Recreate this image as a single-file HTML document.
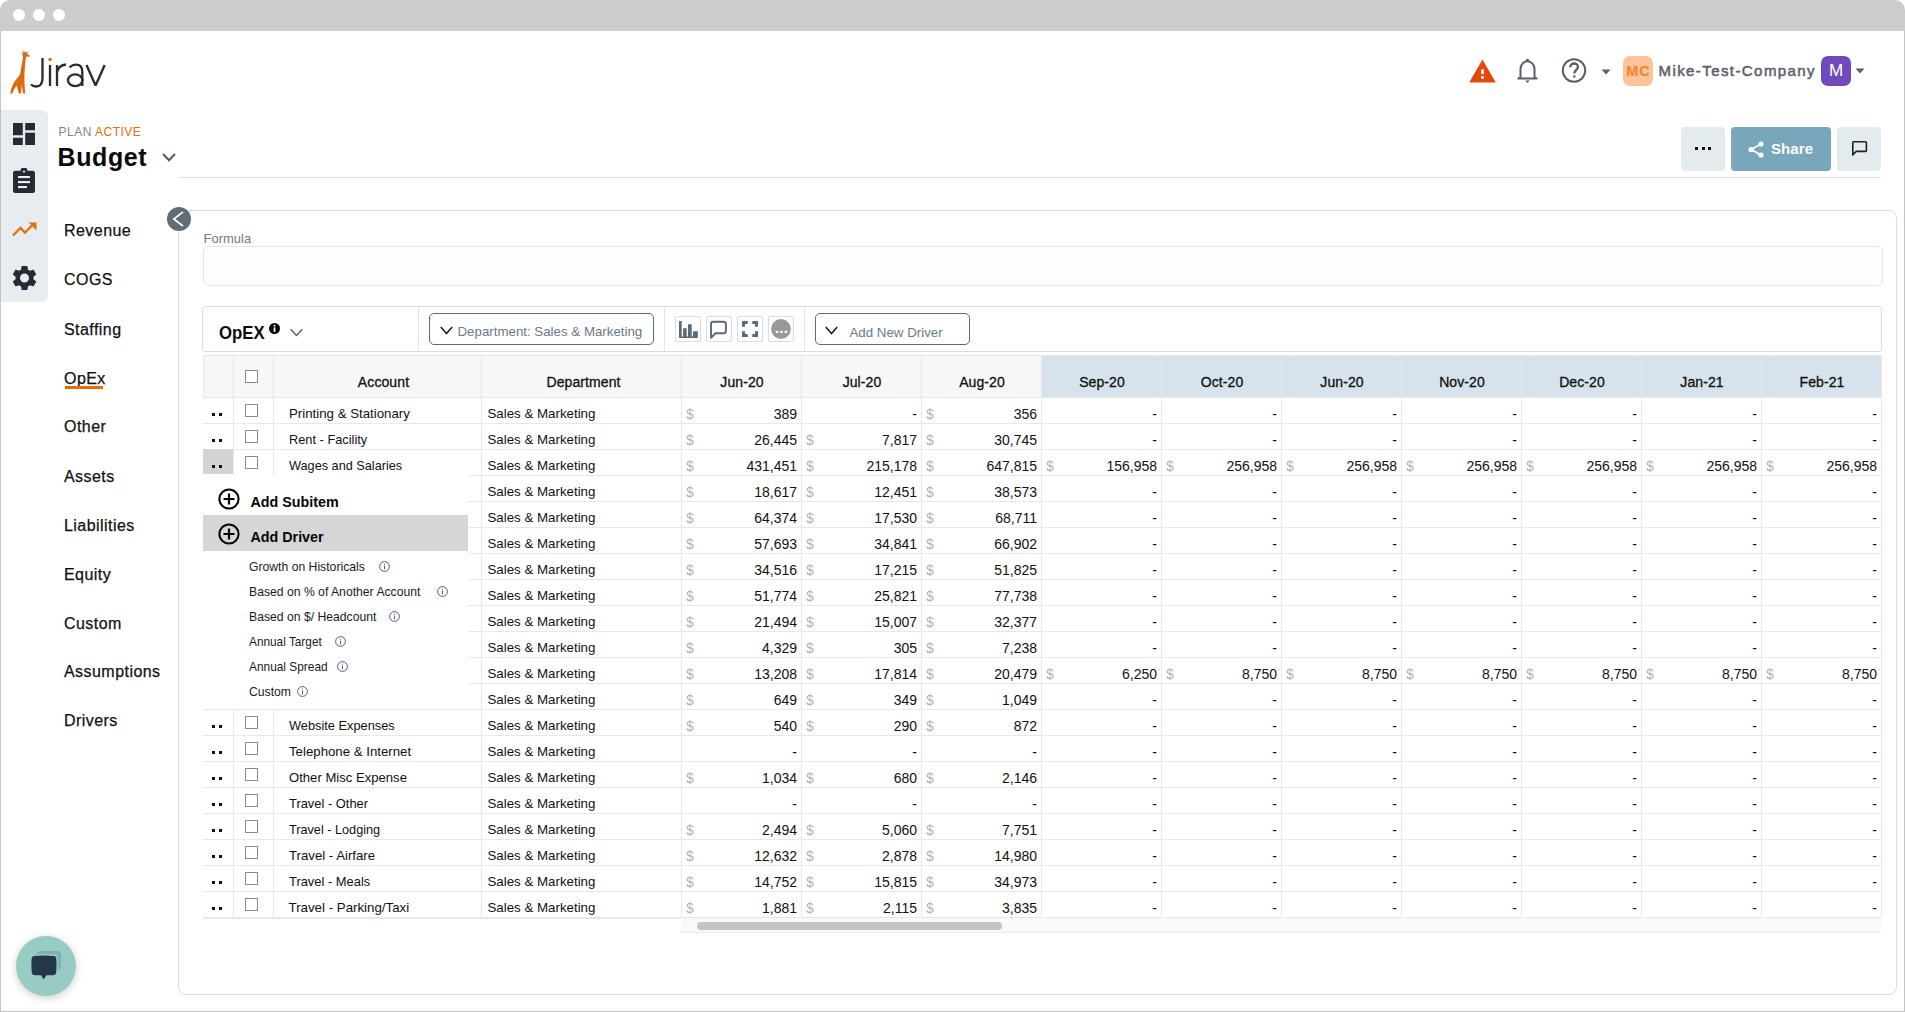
<!DOCTYPE html><html><head><meta charset="utf-8"><style>
html,body{margin:0;padding:0;width:1905px;height:1012px;overflow:hidden;background:#fff;font-family:"Liberation Sans", sans-serif;}
.t{position:absolute;white-space:nowrap;color:#000;}
.b{position:absolute;box-sizing:border-box;}
</style></head><body>
<div class="b" style="left:0px;top:0px;width:1905px;height:1012px;background:#fff;"></div>
<div class="b" style="left:0px;top:0px;width:1905px;height:31px;background:#cdcdcd;border-radius:10px 10px 0 0;"></div>
<div class="b" style="left:13px;top:9px;width:12px;height:12px;background:#fff;border-radius:50%;"></div>
<div class="b" style="left:33px;top:9px;width:12px;height:12px;background:#fff;border-radius:50%;"></div>
<div class="b" style="left:53px;top:9px;width:12px;height:12px;background:#fff;border-radius:50%;"></div>
<div class="b" style="left:0px;top:31px;width:1px;height:981px;background:#c4c4c4;"></div>
<div class="b" style="left:1904px;top:31px;width:1px;height:981px;background:#c4c4c4;"></div>
<div class="b" style="left:0px;top:1011px;width:1905px;height:1px;background:#c4c4c4;"></div>
<svg class="b" style="left:0;top:0" width="120" height="100" viewBox="0 0 120 100"><path fill="#e06a0a" d="M21 52.3 L23 53.6 L23.4 50.2 L24.2 52.4 L25.1 50.2 L25.6 52.7 L28.2 51.6 L27.2 54.3 L29.9 55.4 L29.6 56.7 L26.6 56.4 L25.9 57.2 C25.2 64 24.3 72 24.4 79 C24.4 84 25 89 25.1 93.4 L23 93.4 L21.8 84.5 L21.1 93.4 L18.9 93.4 L16.8 85.8 C15 87.5 13.5 90.5 12.6 93.4 L10.3 93.4 C11 88 13 83 16.5 79 C18.5 77 19.8 75.5 20.5 72 L23 57.5 L22.6 54.6 Z"/><g fill="none" stroke="#2b2b2b" stroke-width="2.3" stroke-linecap="butt"><path d="M42.5 58 V78 c0 6-3 8.5-6.5 8.5 c-2.5 0-4-1-5-2"/><path d="M50 65 V86"/><path d="M57 65 V86 M57 72 c1-4 4-7 9-7.5"/><path d="M69.5 67.3 c2-1.8 4.2-2.6 6.3-2.6 c4.5 0 6.5 2.5 6.5 7 V86"/><ellipse cx="75.2" cy="80.2" rx="7.2" ry="5.9"/><path stroke-linejoin="bevel" d="M86.5 65 L95.6 85.5 L104.7 65"/></g><circle cx="50" cy="59.5" r="1.7" fill="#e07010"/></svg>
<div class="b" style="left:1px;top:110px;width:47px;height:192px;background:#e6ecef;border-radius:0 6px 6px 0;"></div>
<svg class="b" style="left:13px;top:123px;" width="22" height="22" viewBox="3 3 18 18"><path fill="#262a33" d="M3 13h8V3H3v10zm0 8h8v-6H3v6zm10 0h8V11h-8v10zm0-18v6h8V3h-8z"/></svg>
<svg class="b" style="left:13px;top:168px;" width="22" height="25" viewBox="0 0 22 25"><path fill="#262a33" d="M2.2 2.8 H7.6 A3.4 3.4 0 0 1 14.4 2.8 H19.8 A2.2 2.2 0 0 1 22 5 V22.8 A2.2 2.2 0 0 1 19.8 25 H2.2 A2.2 2.2 0 0 1 0 22.8 V5 A2.2 2.2 0 0 1 2.2 2.8 Z"/><circle cx="11" cy="3.6" r="1.1" fill="#e6ecef"/><rect x="5" y="8" width="12" height="2.1" fill="#e6ecef"/><rect x="5" y="13" width="12" height="2.1" fill="#e6ecef"/><rect x="5" y="18" width="9" height="2.1" fill="#e6ecef"/></svg>
<svg class="b" style="left:12px;top:222px;" width="25" height="15" viewBox="0 0 25 15"><path fill="none" stroke="#e07010" stroke-width="2.4" d="M1 13.5 L8.5 6 L13 10.5 L20 3.5"/><path fill="#e07010" d="M16.5 0.5 H24.5 V8.5 Z"/></svg>
<svg class="b" style="left:11.5px;top:264.5px;" width="25" height="26" viewBox="2 2 20 20"><path fill="#262a33" d="M19.14 12.94c.04-.3.06-.61.06-.94 0-.32-.02-.64-.07-.94l2.03-1.58c.18-.14.23-.41.12-.61l-1.92-3.32c-.12-.22-.37-.29-.59-.22l-2.39.96c-.5-.38-1.03-.7-1.62-.94l-.36-2.54c-.04-.24-.24-.41-.48-.41h-3.84c-.24 0-.43.17-.47.41l-.36 2.54c-.59.24-1.13.57-1.62.94l-2.39-.96c-.22-.08-.47 0-.59.22L2.74 8.87c-.12.21-.08.47.12.61l2.03 1.58c-.05.3-.09.63-.09.94s.02.64.07.94l-2.03 1.58c-.18.14-.23.41-.12.61l1.92 3.32c.12.22.37.29.59.22l2.39-.96c.5.38 1.03.7 1.62.94l.36 2.54c.05.24.24.41.48.41h3.84c.24 0 .44-.17.47-.41l.36-2.54c.59-.24 1.13-.56 1.62-.94l2.39.96c.22.08.47 0 .59-.22l1.92-3.32c.12-.22.07-.47-.12-.61l-2.01-1.58zM12 15.6c-1.98 0-3.6-1.62-3.6-3.6s1.62-3.6 3.6-3.6 3.6 1.62 3.6 3.6-1.62 3.6-3.6 3.6z"/></svg>
<div class="t" style="left:58.5px;top:124.50px;font-size:12px;line-height:15px;color:#858585;letter-spacing:0.5px;">PLAN <span style="color:#e07010">ACTIVE</span></div>
<div class="t" style="left:57.5px;top:141.50px;font-size:25px;line-height:31px;font-weight:bold;color:#0a0a0a;letter-spacing:0.6px;">Budget</div>
<svg class="b" style="left:162px;top:153px;" width="14" height="9" viewBox="0 0 14 9"><path fill="none" stroke="#4d5d6c" stroke-width="2" d="M1 1 L7 7.3 L13 1"/></svg>
<div class="b" style="left:178px;top:177px;width:1703px;height:1px;background:#e3e3e3;"></div>
<div class="t" style="left:64px;top:220.50px;font-size:16px;line-height:20px;color:#111;letter-spacing:0.45px;-webkit-text-stroke:0.25px #111;">Revenue</div>
<div class="t" style="left:64px;top:269.50px;font-size:16px;line-height:20px;color:#111;letter-spacing:0.45px;-webkit-text-stroke:0.25px #111;">COGS</div>
<div class="t" style="left:64px;top:319.50px;font-size:16px;line-height:20px;color:#111;letter-spacing:0.45px;-webkit-text-stroke:0.25px #111;">Staffing</div>
<div class="t" style="left:64px;top:368.50px;font-size:16px;line-height:20px;color:#111;letter-spacing:0.45px;-webkit-text-stroke:0.25px #111;">OpEx</div>
<div class="t" style="left:64px;top:416.50px;font-size:16px;line-height:20px;color:#111;letter-spacing:0.45px;-webkit-text-stroke:0.25px #111;">Other</div>
<div class="t" style="left:64px;top:466.50px;font-size:16px;line-height:20px;color:#111;letter-spacing:0.45px;-webkit-text-stroke:0.25px #111;">Assets</div>
<div class="t" style="left:64px;top:515.50px;font-size:16px;line-height:20px;color:#111;letter-spacing:0.45px;-webkit-text-stroke:0.25px #111;">Liabilities</div>
<div class="t" style="left:64px;top:564.50px;font-size:16px;line-height:20px;color:#111;letter-spacing:0.45px;-webkit-text-stroke:0.25px #111;">Equity</div>
<div class="t" style="left:64px;top:613.50px;font-size:16px;line-height:20px;color:#111;letter-spacing:0.45px;-webkit-text-stroke:0.25px #111;">Custom</div>
<div class="t" style="left:64px;top:661.50px;font-size:16px;line-height:20px;color:#111;letter-spacing:0.45px;-webkit-text-stroke:0.25px #111;">Assumptions</div>
<div class="t" style="left:64px;top:710.50px;font-size:16px;line-height:20px;color:#111;letter-spacing:0.45px;-webkit-text-stroke:0.25px #111;">Drivers</div>
<div class="b" style="left:65px;top:386px;width:38px;height:3px;background:#e86c00;"></div>
<svg class="b" style="left:1469px;top:59px;" width="27" height="24" viewBox="0 0 27 24"><path fill="#e4470b" d="M13.5 0.5 L26.8 23.5 H0.2 Z"/><rect x="12.2" y="10.4" width="2.6" height="4.8" fill="#fff"/><rect x="12.2" y="17.2" width="2.6" height="2.6" fill="#fff"/></svg>
<svg class="b" style="left:1516px;top:58px;" width="23" height="25" viewBox="0 0 23 25"><path fill="none" stroke="#5b5e6b" stroke-width="2" stroke-linejoin="round" d="M4.5 20 V11 c0-4.2 3-7.7 7-7.7 s7 3.5 7 7.7 V18.5 c0 1 1 1.5 2 1.5 M4.5 18.5 c0 1-1 1.5-2 1.5 M1.5 20.4 H21.5"/><circle cx="11.5" cy="2.3" r="1.6" fill="#5b5e6b"/><path fill="#5b5e6b" d="M9.2 22.6 h4.6 l-2.3 2.3z"/></svg>
<svg class="b" style="left:1561px;top:58px;" width="26" height="25" viewBox="0 0 26 25"><circle cx="13" cy="12.5" r="11.2" fill="none" stroke="#5b5e6b" stroke-width="2"/><path fill="none" stroke="#5b5e6b" stroke-width="2.3" d="M9.2 9.3 c0-2.4 1.8-3.8 3.9-3.8 s3.9 1.4 3.9 3.6 c0 2.6-3.7 3.1-3.7 6.3"/><rect x="12.1" y="17.3" width="2.3" height="2.3" fill="#5b5e6b"/></svg>
<svg class="b" style="left:1601px;top:69px;" width="10" height="6" viewBox="0 0 10 6"><path fill="#5b5e6b" d="M0.5 0.5 H9.5 L5 5.5z"/></svg>
<div class="b" style="left:1623px;top:56px;width:30px;height:30px;background:#fdc49b;border-radius:7px;"></div>
<div class="t" style="left:1438.5px;width:400px;text-align:center;top:62.00px;font-size:14.5px;line-height:18px;color:#f7822b;font-weight:bold;letter-spacing:1px;">MC</div>
<div class="t" style="left:1658.5px;top:61.00px;font-size:15px;line-height:19px;color:#5f616d;letter-spacing:1.42px;-webkit-text-stroke:0.55px #5f616d;">Mike-Test-Company</div>
<div class="b" style="left:1821px;top:56px;width:30px;height:30px;background:#7049bd;border-radius:7px;"></div>
<div class="t" style="left:1636px;width:400px;text-align:center;top:60.00px;font-size:17px;line-height:21px;color:#fff;">M</div>
<svg class="b" style="left:1855px;top:68px;" width="10" height="6" viewBox="0 0 10 6"><path fill="#5b5e6b" d="M0.5 0.5 H9.5 L5 5.5z"/></svg>
<div class="b" style="left:1681px;top:127px;width:44px;height:44px;background:#e4ebef;border-radius:4px;"></div>
<div class="b" style="left:1695px;top:147px;width:3px;height:3px;background:#111;"></div>
<div class="b" style="left:1701.5px;top:147px;width:3px;height:3px;background:#111;"></div>
<div class="b" style="left:1708px;top:147px;width:3px;height:3px;background:#111;"></div>
<div class="b" style="left:1731px;top:127px;width:100px;height:44px;background:#78a6bb;border-radius:4px;"></div>
<svg class="b" style="left:1748px;top:141px;" width="16" height="17" viewBox="0 0 16 17"><g fill="#fff"><circle cx="13" cy="3" r="2.6"/><circle cx="3" cy="8.5" r="2.6"/><circle cx="13" cy="14" r="2.6"/></g><path fill="none" stroke="#fff" stroke-width="1.8" d="M13 3 L3 8.5 L13 14"/></svg>
<div class="t" style="left:1771px;top:139.00px;font-size:15px;line-height:19px;color:#fff;font-weight:bold;letter-spacing:0.1px;">Share</div>
<div class="b" style="left:1837px;top:127px;width:44px;height:44px;background:#e4ebef;border-radius:4px;"></div>
<svg class="b" style="left:1851px;top:140px;" width="17" height="17" viewBox="0 0 17 17"><path fill="none" stroke="#222" stroke-width="1.6" stroke-linejoin="round" d="M1.8 15 V2.5 a0.8 0.8 0 0 1 0.8-0.8 H14.6 a0.8 0.8 0 0 1 0.8 0.8 V10.6 a0.8 0.8 0 0 1-0.8 0.8 H5.2 Z"/></svg>
<div class="b" style="left:178px;top:210px;width:1719px;height:785px;border:1.5px solid #dcdcd8;border-radius:8px;"></div>
<svg class="b" style="left:167px;top:207px;" width="24" height="24" viewBox="0 0 24 24"><circle cx="12" cy="12" r="12" fill="#5e6d7a"/><path fill="none" stroke="#fff" stroke-width="1.7" d="M16 4.8 L6.8 12 L16 19"/></svg>
<div class="t" style="left:203.5px;top:230.50px;font-size:13px;line-height:16px;color:#6d7b88;">Formula</div>
<div class="b" style="left:203px;top:246px;width:1680px;height:40px;border:1px solid #e6e6e6;border-radius:5px;background:#fefefe;"></div>
<div class="b" style="left:202px;top:306px;width:1680px;height:46px;border:1px solid #dcdcdc;border-radius:3px;background:#fff;"></div>
<div class="b" style="left:418px;top:307px;width:1px;height:44px;background:#e3e3e3;"></div>
<div class="b" style="left:664px;top:307px;width:1px;height:44px;background:#e3e3e3;"></div>
<div class="b" style="left:804px;top:307px;width:1px;height:44px;background:#e3e3e3;"></div>
<div class="t" style="left:218.5px;top:321.50px;font-size:18.2px;line-height:23px;font-weight:bold;color:#0a0a0a;transform:scaleX(0.92);transform-origin:0 0;">OpEX</div>
<svg class="b" style="left:269px;top:323px;" width="11" height="11" viewBox="0 0 11 11"><circle cx="5.5" cy="5.5" r="5.5" fill="#000"/><rect x="4.6" y="4.4" width="1.8" height="4.4" fill="#fff"/><circle cx="5.5" cy="2.8" r="1" fill="#fff"/></svg>
<svg class="b" style="left:290px;top:328px;" width="13" height="9" viewBox="0 0 13 9"><path fill="none" stroke="#4d5a66" stroke-width="1.3" d="M0.7 1.2 L6.5 7.5 L12.3 1.2"/></svg>
<div class="b" style="left:429px;top:313px;width:225px;height:32px;border:1.5px solid #5b6b79;border-radius:5px;"></div>
<svg class="b" style="left:440px;top:326px;" width="13" height="9" viewBox="0 0 13 9"><path fill="none" stroke="#1e1e1e" stroke-width="1.6" d="M0.8 1 L6.5 7.5 L12.2 1"/></svg>
<div class="t" style="left:457.5px;top:323.00px;font-size:13.3px;line-height:17px;color:#6b7987;">Department: Sales &amp; Marketing</div>
<div class="b" style="left:675px;top:316px;width:26px;height:26px;border:1px solid #dcdcdc;border-radius:2px;"></div>
<div class="b" style="left:706px;top:316px;width:26px;height:26px;border:1px solid #dcdcdc;border-radius:2px;"></div>
<div class="b" style="left:737px;top:316px;width:26px;height:26px;border:1px solid #dcdcdc;border-radius:2px;"></div>
<div class="b" style="left:768px;top:316px;width:26px;height:26px;border:1px solid #dcdcdc;border-radius:2px;"></div>
<svg class="b" style="left:679px;top:321px;" width="19" height="17" viewBox="0 0 19 17"><path fill="#5b6a78" d="M0 0 H2.7 V17 H0 Z M4.1 7.2 H7.7 V17 H4.1 Z M9 3.3 H12.7 V17 H9 Z M14 10.3 H18.8 V17 H14 Z M0 15.4 H18.8 V17 H0 Z"/></svg>
<svg class="b" style="left:709px;top:320px;" width="19" height="19" viewBox="0 0 19 19"><path fill="none" stroke="#5b6a78" stroke-width="1.9" stroke-linejoin="round" d="M2 17.8 V4 a2.3 2.3 0 0 1 2.3-2.3 H14.6 a2.3 2.3 0 0 1 2.3 2.3 V11 a2.3 2.3 0 0 1-2.3 2.3 H6.6 Z"/></svg>
<svg class="b" style="left:742px;top:321px;" width="16" height="16" viewBox="0 0 16 16"><path fill="#5b6a78" d="M0 0 H5.7 V3 H3 V5.7 H0 Z M10.3 0 H16 V5.7 H13 V3 H10.3 Z M16 10.3 V16 H10.3 V13 H13 V10.3 Z M5.7 16 H0 V10.3 H3 V13 H5.7 Z"/></svg>
<svg class="b" style="left:771px;top:319px;" width="20" height="20" viewBox="0 0 20 20"><circle cx="10" cy="10" r="9.9" fill="#999"/><g fill="#fff"><rect x="4.9" y="11.7" width="2.3" height="2.3" rx="0.6"/><rect x="9.2" y="11.7" width="2.3" height="2.3" rx="0.6"/><rect x="13.8" y="11.7" width="2.3" height="2.3" rx="0.6"/></g></svg>
<div class="b" style="left:815px;top:313px;width:155px;height:32px;border:1.5px solid #5b6b79;border-radius:5px;"></div>
<svg class="b" style="left:825px;top:326px;" width="13" height="9" viewBox="0 0 13 9"><path fill="none" stroke="#1e1e1e" stroke-width="1.6" d="M0.8 1 L6.5 7.5 L12.2 1"/></svg>
<div class="t" style="left:849.5px;top:323.50px;font-size:13.3px;line-height:17px;color:#6b7987;">Add New Driver</div>
<div class="b" style="left:203px;top:355px;width:838px;height:42px;background:#f7f7f7;"></div>
<div class="b" style="left:1041px;top:355px;width:840px;height:42px;background:#d6e3ec;"></div>
<div class="b" style="left:203px;top:355px;width:1678px;height:1px;background:#e8e8e8;"></div>
<div class="b" style="left:203px;top:355px;width:1px;height:42px;background:#e8e8e8;"></div>
<div class="b" style="left:203px;top:397px;width:1678px;height:1px;background:#e8e8e8;"></div>
<div class="b" style="left:233px;top:355px;width:1px;height:42px;background:#e8e8e8;"></div>
<div class="b" style="left:273px;top:355px;width:1px;height:42px;background:#e8e8e8;"></div>
<div class="b" style="left:481px;top:355px;width:1px;height:42px;background:#e8e8e8;"></div>
<div class="b" style="left:681px;top:355px;width:1px;height:42px;background:#e8e8e8;"></div>
<div class="b" style="left:801px;top:355px;width:1px;height:42px;background:#e8e8e8;"></div>
<div class="b" style="left:921px;top:355px;width:1px;height:42px;background:#e8e8e8;"></div>
<div class="b" style="left:1041px;top:355px;width:1px;height:42px;background:#e8e8e8;"></div>
<div class="b" style="left:1161px;top:355px;width:1px;height:42px;background:#e8e8e8;"></div>
<div class="b" style="left:1281px;top:355px;width:1px;height:42px;background:#e8e8e8;"></div>
<div class="b" style="left:1401px;top:355px;width:1px;height:42px;background:#e8e8e8;"></div>
<div class="b" style="left:1521px;top:355px;width:1px;height:42px;background:#e8e8e8;"></div>
<div class="b" style="left:1641px;top:355px;width:1px;height:42px;background:#e8e8e8;"></div>
<div class="b" style="left:1761px;top:355px;width:1px;height:42px;background:#e8e8e8;"></div>
<div class="b" style="left:1881px;top:355px;width:1px;height:42px;background:#e8e8e8;"></div>
<div class="b" style="left:245px;top:370px;width:13px;height:13px;border:1px solid #8a8a8a;background:#fff;"></div>
<div class="t" style="left:183.5px;width:400px;text-align:center;top:373.00px;font-size:14px;line-height:18px;color:#111;-webkit-text-stroke:0.3px #111;letter-spacing:0.1px;">Account</div>
<div class="t" style="left:383.5px;width:400px;text-align:center;top:373.00px;font-size:14px;line-height:18px;color:#111;-webkit-text-stroke:0.3px #111;letter-spacing:0.1px;">Department</div>
<div class="t" style="left:542.0px;width:400px;text-align:center;top:373.00px;font-size:14px;line-height:18px;color:#111;-webkit-text-stroke:0.3px #111;letter-spacing:0.1px;">Jun-20</div>
<div class="t" style="left:662.0px;width:400px;text-align:center;top:373.00px;font-size:14px;line-height:18px;color:#111;-webkit-text-stroke:0.3px #111;letter-spacing:0.1px;">Jul-20</div>
<div class="t" style="left:782.0px;width:400px;text-align:center;top:373.00px;font-size:14px;line-height:18px;color:#111;-webkit-text-stroke:0.3px #111;letter-spacing:0.1px;">Aug-20</div>
<div class="t" style="left:902.0px;width:400px;text-align:center;top:373.00px;font-size:14px;line-height:18px;color:#111;-webkit-text-stroke:0.3px #111;letter-spacing:0.1px;">Sep-20</div>
<div class="t" style="left:1022.0px;width:400px;text-align:center;top:373.00px;font-size:14px;line-height:18px;color:#111;-webkit-text-stroke:0.3px #111;letter-spacing:0.1px;">Oct-20</div>
<div class="t" style="left:1142.0px;width:400px;text-align:center;top:373.00px;font-size:14px;line-height:18px;color:#111;-webkit-text-stroke:0.3px #111;letter-spacing:0.1px;">Jun-20</div>
<div class="t" style="left:1262.0px;width:400px;text-align:center;top:373.00px;font-size:14px;line-height:18px;color:#111;-webkit-text-stroke:0.3px #111;letter-spacing:0.1px;">Nov-20</div>
<div class="t" style="left:1382.0px;width:400px;text-align:center;top:373.00px;font-size:14px;line-height:18px;color:#111;-webkit-text-stroke:0.3px #111;letter-spacing:0.1px;">Dec-20</div>
<div class="t" style="left:1502.0px;width:400px;text-align:center;top:373.00px;font-size:14px;line-height:18px;color:#111;-webkit-text-stroke:0.3px #111;letter-spacing:0.1px;">Jan-21</div>
<div class="t" style="left:1622.0px;width:400px;text-align:center;top:373.00px;font-size:14px;line-height:18px;color:#111;-webkit-text-stroke:0.3px #111;letter-spacing:0.1px;">Feb-21</div>
<div class="b" style="left:203px;top:423px;width:1678px;height:1px;background:#e8e8e8;"></div>
<div class="b" style="left:233px;top:397px;width:1px;height:26px;background:#e8e8e8;"></div>
<div class="b" style="left:273px;top:397px;width:1px;height:26px;background:#e8e8e8;"></div>
<div class="b" style="left:481px;top:397px;width:1px;height:26px;background:#e8e8e8;"></div>
<div class="b" style="left:681px;top:397px;width:1px;height:26px;background:#e8e8e8;"></div>
<div class="b" style="left:801px;top:397px;width:1px;height:26px;background:#e8e8e8;"></div>
<div class="b" style="left:921px;top:397px;width:1px;height:26px;background:#e8e8e8;"></div>
<div class="b" style="left:1041px;top:397px;width:1px;height:26px;background:#e8e8e8;"></div>
<div class="b" style="left:1161px;top:397px;width:1px;height:26px;background:#e8e8e8;"></div>
<div class="b" style="left:1281px;top:397px;width:1px;height:26px;background:#e8e8e8;"></div>
<div class="b" style="left:1401px;top:397px;width:1px;height:26px;background:#e8e8e8;"></div>
<div class="b" style="left:1521px;top:397px;width:1px;height:26px;background:#e8e8e8;"></div>
<div class="b" style="left:1641px;top:397px;width:1px;height:26px;background:#e8e8e8;"></div>
<div class="b" style="left:1761px;top:397px;width:1px;height:26px;background:#e8e8e8;"></div>
<div class="b" style="left:1881px;top:397px;width:1px;height:26px;background:#e8e8e8;"></div>
<div class="t" style="left:487.5px;top:405.00px;font-size:13.3px;line-height:17px;color:#111;">Sales &amp; Marketing</div>
<div class="t" style="left:686px;top:404.50px;font-size:14px;line-height:18px;color:#b3b3b3;">$</div>
<div class="t" style="right:1108px;top:404.50px;font-size:14px;line-height:18px;color:#111;">389</div>
<div class="t" style="right:988px;top:404.50px;font-size:14px;line-height:18px;color:#111;">-</div>
<div class="t" style="left:926px;top:404.50px;font-size:14px;line-height:18px;color:#b3b3b3;">$</div>
<div class="t" style="right:868px;top:404.50px;font-size:14px;line-height:18px;color:#111;">356</div>
<div class="t" style="right:748px;top:404.50px;font-size:14px;line-height:18px;color:#111;">-</div>
<div class="t" style="right:628px;top:404.50px;font-size:14px;line-height:18px;color:#111;">-</div>
<div class="t" style="right:508px;top:404.50px;font-size:14px;line-height:18px;color:#111;">-</div>
<div class="t" style="right:388px;top:404.50px;font-size:14px;line-height:18px;color:#111;">-</div>
<div class="t" style="right:268px;top:404.50px;font-size:14px;line-height:18px;color:#111;">-</div>
<div class="t" style="right:148px;top:404.50px;font-size:14px;line-height:18px;color:#111;">-</div>
<div class="t" style="right:28px;top:404.50px;font-size:14px;line-height:18px;color:#111;">-</div>
<div class="t" style="left:288.5px;top:405.00px;font-size:13.3px;line-height:17px;color:#111;transform:scaleX(0.997);transform-origin:0 0;">Printing &amp; Stationary</div>
<div class="b" style="left:245px;top:404px;width:13px;height:13px;border:1px solid #8a8a8a;background:#fff;"></div>
<div class="b" style="left:212px;top:413px;width:3px;height:3px;background:#111;"></div>
<div class="b" style="left:219px;top:413px;width:3px;height:3px;background:#111;"></div>
<div class="b" style="left:203px;top:449px;width:1678px;height:1px;background:#e8e8e8;"></div>
<div class="b" style="left:233px;top:423px;width:1px;height:26px;background:#e8e8e8;"></div>
<div class="b" style="left:273px;top:423px;width:1px;height:26px;background:#e8e8e8;"></div>
<div class="b" style="left:481px;top:423px;width:1px;height:26px;background:#e8e8e8;"></div>
<div class="b" style="left:681px;top:423px;width:1px;height:26px;background:#e8e8e8;"></div>
<div class="b" style="left:801px;top:423px;width:1px;height:26px;background:#e8e8e8;"></div>
<div class="b" style="left:921px;top:423px;width:1px;height:26px;background:#e8e8e8;"></div>
<div class="b" style="left:1041px;top:423px;width:1px;height:26px;background:#e8e8e8;"></div>
<div class="b" style="left:1161px;top:423px;width:1px;height:26px;background:#e8e8e8;"></div>
<div class="b" style="left:1281px;top:423px;width:1px;height:26px;background:#e8e8e8;"></div>
<div class="b" style="left:1401px;top:423px;width:1px;height:26px;background:#e8e8e8;"></div>
<div class="b" style="left:1521px;top:423px;width:1px;height:26px;background:#e8e8e8;"></div>
<div class="b" style="left:1641px;top:423px;width:1px;height:26px;background:#e8e8e8;"></div>
<div class="b" style="left:1761px;top:423px;width:1px;height:26px;background:#e8e8e8;"></div>
<div class="b" style="left:1881px;top:423px;width:1px;height:26px;background:#e8e8e8;"></div>
<div class="t" style="left:487.5px;top:431.00px;font-size:13.3px;line-height:17px;color:#111;">Sales &amp; Marketing</div>
<div class="t" style="left:686px;top:430.50px;font-size:14px;line-height:18px;color:#b3b3b3;">$</div>
<div class="t" style="right:1108px;top:430.50px;font-size:14px;line-height:18px;color:#111;">26,445</div>
<div class="t" style="left:806px;top:430.50px;font-size:14px;line-height:18px;color:#b3b3b3;">$</div>
<div class="t" style="right:988px;top:430.50px;font-size:14px;line-height:18px;color:#111;">7,817</div>
<div class="t" style="left:926px;top:430.50px;font-size:14px;line-height:18px;color:#b3b3b3;">$</div>
<div class="t" style="right:868px;top:430.50px;font-size:14px;line-height:18px;color:#111;">30,745</div>
<div class="t" style="right:748px;top:430.50px;font-size:14px;line-height:18px;color:#111;">-</div>
<div class="t" style="right:628px;top:430.50px;font-size:14px;line-height:18px;color:#111;">-</div>
<div class="t" style="right:508px;top:430.50px;font-size:14px;line-height:18px;color:#111;">-</div>
<div class="t" style="right:388px;top:430.50px;font-size:14px;line-height:18px;color:#111;">-</div>
<div class="t" style="right:268px;top:430.50px;font-size:14px;line-height:18px;color:#111;">-</div>
<div class="t" style="right:148px;top:430.50px;font-size:14px;line-height:18px;color:#111;">-</div>
<div class="t" style="right:28px;top:430.50px;font-size:14px;line-height:18px;color:#111;">-</div>
<div class="t" style="left:288.5px;top:431.00px;font-size:13.3px;line-height:17px;color:#111;transform:scaleX(0.963);transform-origin:0 0;">Rent - Facility</div>
<div class="b" style="left:245px;top:430px;width:13px;height:13px;border:1px solid #8a8a8a;background:#fff;"></div>
<div class="b" style="left:212px;top:439px;width:3px;height:3px;background:#111;"></div>
<div class="b" style="left:219px;top:439px;width:3px;height:3px;background:#111;"></div>
<div class="b" style="left:203px;top:475px;width:1678px;height:1px;background:#e8e8e8;"></div>
<div class="b" style="left:233px;top:449px;width:1px;height:26px;background:#e8e8e8;"></div>
<div class="b" style="left:273px;top:449px;width:1px;height:26px;background:#e8e8e8;"></div>
<div class="b" style="left:481px;top:449px;width:1px;height:26px;background:#e8e8e8;"></div>
<div class="b" style="left:681px;top:449px;width:1px;height:26px;background:#e8e8e8;"></div>
<div class="b" style="left:801px;top:449px;width:1px;height:26px;background:#e8e8e8;"></div>
<div class="b" style="left:921px;top:449px;width:1px;height:26px;background:#e8e8e8;"></div>
<div class="b" style="left:1041px;top:449px;width:1px;height:26px;background:#e8e8e8;"></div>
<div class="b" style="left:1161px;top:449px;width:1px;height:26px;background:#e8e8e8;"></div>
<div class="b" style="left:1281px;top:449px;width:1px;height:26px;background:#e8e8e8;"></div>
<div class="b" style="left:1401px;top:449px;width:1px;height:26px;background:#e8e8e8;"></div>
<div class="b" style="left:1521px;top:449px;width:1px;height:26px;background:#e8e8e8;"></div>
<div class="b" style="left:1641px;top:449px;width:1px;height:26px;background:#e8e8e8;"></div>
<div class="b" style="left:1761px;top:449px;width:1px;height:26px;background:#e8e8e8;"></div>
<div class="b" style="left:1881px;top:449px;width:1px;height:26px;background:#e8e8e8;"></div>
<div class="t" style="left:487.5px;top:457.00px;font-size:13.3px;line-height:17px;color:#111;">Sales &amp; Marketing</div>
<div class="t" style="left:686px;top:456.50px;font-size:14px;line-height:18px;color:#b3b3b3;">$</div>
<div class="t" style="right:1108px;top:456.50px;font-size:14px;line-height:18px;color:#111;">431,451</div>
<div class="t" style="left:806px;top:456.50px;font-size:14px;line-height:18px;color:#b3b3b3;">$</div>
<div class="t" style="right:988px;top:456.50px;font-size:14px;line-height:18px;color:#111;">215,178</div>
<div class="t" style="left:926px;top:456.50px;font-size:14px;line-height:18px;color:#b3b3b3;">$</div>
<div class="t" style="right:868px;top:456.50px;font-size:14px;line-height:18px;color:#111;">647,815</div>
<div class="t" style="left:1046px;top:456.50px;font-size:14px;line-height:18px;color:#b3b3b3;">$</div>
<div class="t" style="right:748px;top:456.50px;font-size:14px;line-height:18px;color:#111;">156,958</div>
<div class="t" style="left:1166px;top:456.50px;font-size:14px;line-height:18px;color:#b3b3b3;">$</div>
<div class="t" style="right:628px;top:456.50px;font-size:14px;line-height:18px;color:#111;">256,958</div>
<div class="t" style="left:1286px;top:456.50px;font-size:14px;line-height:18px;color:#b3b3b3;">$</div>
<div class="t" style="right:508px;top:456.50px;font-size:14px;line-height:18px;color:#111;">256,958</div>
<div class="t" style="left:1406px;top:456.50px;font-size:14px;line-height:18px;color:#b3b3b3;">$</div>
<div class="t" style="right:388px;top:456.50px;font-size:14px;line-height:18px;color:#111;">256,958</div>
<div class="t" style="left:1526px;top:456.50px;font-size:14px;line-height:18px;color:#b3b3b3;">$</div>
<div class="t" style="right:268px;top:456.50px;font-size:14px;line-height:18px;color:#111;">256,958</div>
<div class="t" style="left:1646px;top:456.50px;font-size:14px;line-height:18px;color:#b3b3b3;">$</div>
<div class="t" style="right:148px;top:456.50px;font-size:14px;line-height:18px;color:#111;">256,958</div>
<div class="t" style="left:1766px;top:456.50px;font-size:14px;line-height:18px;color:#b3b3b3;">$</div>
<div class="t" style="right:28px;top:456.50px;font-size:14px;line-height:18px;color:#111;">256,958</div>
<div class="t" style="left:288.5px;top:457.00px;font-size:13.3px;line-height:17px;color:#111;transform:scaleX(0.955);transform-origin:0 0;">Wages and Salaries</div>
<div class="b" style="left:245px;top:456px;width:13px;height:13px;border:1px solid #8a8a8a;background:#fff;"></div>
<div class="b" style="left:203px;top:449px;width:30px;height:25px;background:#d4d4d4;"></div>
<div class="b" style="left:212px;top:465px;width:3px;height:3px;background:#111;"></div>
<div class="b" style="left:219px;top:465px;width:3px;height:3px;background:#111;"></div>
<div class="b" style="left:203px;top:501px;width:1678px;height:1px;background:#e8e8e8;"></div>
<div class="b" style="left:233px;top:475px;width:1px;height:26px;background:#e8e8e8;"></div>
<div class="b" style="left:273px;top:475px;width:1px;height:26px;background:#e8e8e8;"></div>
<div class="b" style="left:481px;top:475px;width:1px;height:26px;background:#e8e8e8;"></div>
<div class="b" style="left:681px;top:475px;width:1px;height:26px;background:#e8e8e8;"></div>
<div class="b" style="left:801px;top:475px;width:1px;height:26px;background:#e8e8e8;"></div>
<div class="b" style="left:921px;top:475px;width:1px;height:26px;background:#e8e8e8;"></div>
<div class="b" style="left:1041px;top:475px;width:1px;height:26px;background:#e8e8e8;"></div>
<div class="b" style="left:1161px;top:475px;width:1px;height:26px;background:#e8e8e8;"></div>
<div class="b" style="left:1281px;top:475px;width:1px;height:26px;background:#e8e8e8;"></div>
<div class="b" style="left:1401px;top:475px;width:1px;height:26px;background:#e8e8e8;"></div>
<div class="b" style="left:1521px;top:475px;width:1px;height:26px;background:#e8e8e8;"></div>
<div class="b" style="left:1641px;top:475px;width:1px;height:26px;background:#e8e8e8;"></div>
<div class="b" style="left:1761px;top:475px;width:1px;height:26px;background:#e8e8e8;"></div>
<div class="b" style="left:1881px;top:475px;width:1px;height:26px;background:#e8e8e8;"></div>
<div class="t" style="left:487.5px;top:483.00px;font-size:13.3px;line-height:17px;color:#111;">Sales &amp; Marketing</div>
<div class="t" style="left:686px;top:482.50px;font-size:14px;line-height:18px;color:#b3b3b3;">$</div>
<div class="t" style="right:1108px;top:482.50px;font-size:14px;line-height:18px;color:#111;">18,617</div>
<div class="t" style="left:806px;top:482.50px;font-size:14px;line-height:18px;color:#b3b3b3;">$</div>
<div class="t" style="right:988px;top:482.50px;font-size:14px;line-height:18px;color:#111;">12,451</div>
<div class="t" style="left:926px;top:482.50px;font-size:14px;line-height:18px;color:#b3b3b3;">$</div>
<div class="t" style="right:868px;top:482.50px;font-size:14px;line-height:18px;color:#111;">38,573</div>
<div class="t" style="right:748px;top:482.50px;font-size:14px;line-height:18px;color:#111;">-</div>
<div class="t" style="right:628px;top:482.50px;font-size:14px;line-height:18px;color:#111;">-</div>
<div class="t" style="right:508px;top:482.50px;font-size:14px;line-height:18px;color:#111;">-</div>
<div class="t" style="right:388px;top:482.50px;font-size:14px;line-height:18px;color:#111;">-</div>
<div class="t" style="right:268px;top:482.50px;font-size:14px;line-height:18px;color:#111;">-</div>
<div class="t" style="right:148px;top:482.50px;font-size:14px;line-height:18px;color:#111;">-</div>
<div class="t" style="right:28px;top:482.50px;font-size:14px;line-height:18px;color:#111;">-</div>
<div class="b" style="left:203px;top:527px;width:1678px;height:1px;background:#e8e8e8;"></div>
<div class="b" style="left:233px;top:501px;width:1px;height:26px;background:#e8e8e8;"></div>
<div class="b" style="left:273px;top:501px;width:1px;height:26px;background:#e8e8e8;"></div>
<div class="b" style="left:481px;top:501px;width:1px;height:26px;background:#e8e8e8;"></div>
<div class="b" style="left:681px;top:501px;width:1px;height:26px;background:#e8e8e8;"></div>
<div class="b" style="left:801px;top:501px;width:1px;height:26px;background:#e8e8e8;"></div>
<div class="b" style="left:921px;top:501px;width:1px;height:26px;background:#e8e8e8;"></div>
<div class="b" style="left:1041px;top:501px;width:1px;height:26px;background:#e8e8e8;"></div>
<div class="b" style="left:1161px;top:501px;width:1px;height:26px;background:#e8e8e8;"></div>
<div class="b" style="left:1281px;top:501px;width:1px;height:26px;background:#e8e8e8;"></div>
<div class="b" style="left:1401px;top:501px;width:1px;height:26px;background:#e8e8e8;"></div>
<div class="b" style="left:1521px;top:501px;width:1px;height:26px;background:#e8e8e8;"></div>
<div class="b" style="left:1641px;top:501px;width:1px;height:26px;background:#e8e8e8;"></div>
<div class="b" style="left:1761px;top:501px;width:1px;height:26px;background:#e8e8e8;"></div>
<div class="b" style="left:1881px;top:501px;width:1px;height:26px;background:#e8e8e8;"></div>
<div class="t" style="left:487.5px;top:509.00px;font-size:13.3px;line-height:17px;color:#111;">Sales &amp; Marketing</div>
<div class="t" style="left:686px;top:508.50px;font-size:14px;line-height:18px;color:#b3b3b3;">$</div>
<div class="t" style="right:1108px;top:508.50px;font-size:14px;line-height:18px;color:#111;">64,374</div>
<div class="t" style="left:806px;top:508.50px;font-size:14px;line-height:18px;color:#b3b3b3;">$</div>
<div class="t" style="right:988px;top:508.50px;font-size:14px;line-height:18px;color:#111;">17,530</div>
<div class="t" style="left:926px;top:508.50px;font-size:14px;line-height:18px;color:#b3b3b3;">$</div>
<div class="t" style="right:868px;top:508.50px;font-size:14px;line-height:18px;color:#111;">68,711</div>
<div class="t" style="right:748px;top:508.50px;font-size:14px;line-height:18px;color:#111;">-</div>
<div class="t" style="right:628px;top:508.50px;font-size:14px;line-height:18px;color:#111;">-</div>
<div class="t" style="right:508px;top:508.50px;font-size:14px;line-height:18px;color:#111;">-</div>
<div class="t" style="right:388px;top:508.50px;font-size:14px;line-height:18px;color:#111;">-</div>
<div class="t" style="right:268px;top:508.50px;font-size:14px;line-height:18px;color:#111;">-</div>
<div class="t" style="right:148px;top:508.50px;font-size:14px;line-height:18px;color:#111;">-</div>
<div class="t" style="right:28px;top:508.50px;font-size:14px;line-height:18px;color:#111;">-</div>
<div class="b" style="left:203px;top:553px;width:1678px;height:1px;background:#e8e8e8;"></div>
<div class="b" style="left:233px;top:527px;width:1px;height:26px;background:#e8e8e8;"></div>
<div class="b" style="left:273px;top:527px;width:1px;height:26px;background:#e8e8e8;"></div>
<div class="b" style="left:481px;top:527px;width:1px;height:26px;background:#e8e8e8;"></div>
<div class="b" style="left:681px;top:527px;width:1px;height:26px;background:#e8e8e8;"></div>
<div class="b" style="left:801px;top:527px;width:1px;height:26px;background:#e8e8e8;"></div>
<div class="b" style="left:921px;top:527px;width:1px;height:26px;background:#e8e8e8;"></div>
<div class="b" style="left:1041px;top:527px;width:1px;height:26px;background:#e8e8e8;"></div>
<div class="b" style="left:1161px;top:527px;width:1px;height:26px;background:#e8e8e8;"></div>
<div class="b" style="left:1281px;top:527px;width:1px;height:26px;background:#e8e8e8;"></div>
<div class="b" style="left:1401px;top:527px;width:1px;height:26px;background:#e8e8e8;"></div>
<div class="b" style="left:1521px;top:527px;width:1px;height:26px;background:#e8e8e8;"></div>
<div class="b" style="left:1641px;top:527px;width:1px;height:26px;background:#e8e8e8;"></div>
<div class="b" style="left:1761px;top:527px;width:1px;height:26px;background:#e8e8e8;"></div>
<div class="b" style="left:1881px;top:527px;width:1px;height:26px;background:#e8e8e8;"></div>
<div class="t" style="left:487.5px;top:535.00px;font-size:13.3px;line-height:17px;color:#111;">Sales &amp; Marketing</div>
<div class="t" style="left:686px;top:534.50px;font-size:14px;line-height:18px;color:#b3b3b3;">$</div>
<div class="t" style="right:1108px;top:534.50px;font-size:14px;line-height:18px;color:#111;">57,693</div>
<div class="t" style="left:806px;top:534.50px;font-size:14px;line-height:18px;color:#b3b3b3;">$</div>
<div class="t" style="right:988px;top:534.50px;font-size:14px;line-height:18px;color:#111;">34,841</div>
<div class="t" style="left:926px;top:534.50px;font-size:14px;line-height:18px;color:#b3b3b3;">$</div>
<div class="t" style="right:868px;top:534.50px;font-size:14px;line-height:18px;color:#111;">66,902</div>
<div class="t" style="right:748px;top:534.50px;font-size:14px;line-height:18px;color:#111;">-</div>
<div class="t" style="right:628px;top:534.50px;font-size:14px;line-height:18px;color:#111;">-</div>
<div class="t" style="right:508px;top:534.50px;font-size:14px;line-height:18px;color:#111;">-</div>
<div class="t" style="right:388px;top:534.50px;font-size:14px;line-height:18px;color:#111;">-</div>
<div class="t" style="right:268px;top:534.50px;font-size:14px;line-height:18px;color:#111;">-</div>
<div class="t" style="right:148px;top:534.50px;font-size:14px;line-height:18px;color:#111;">-</div>
<div class="t" style="right:28px;top:534.50px;font-size:14px;line-height:18px;color:#111;">-</div>
<div class="b" style="left:203px;top:579px;width:1678px;height:1px;background:#e8e8e8;"></div>
<div class="b" style="left:233px;top:553px;width:1px;height:26px;background:#e8e8e8;"></div>
<div class="b" style="left:273px;top:553px;width:1px;height:26px;background:#e8e8e8;"></div>
<div class="b" style="left:481px;top:553px;width:1px;height:26px;background:#e8e8e8;"></div>
<div class="b" style="left:681px;top:553px;width:1px;height:26px;background:#e8e8e8;"></div>
<div class="b" style="left:801px;top:553px;width:1px;height:26px;background:#e8e8e8;"></div>
<div class="b" style="left:921px;top:553px;width:1px;height:26px;background:#e8e8e8;"></div>
<div class="b" style="left:1041px;top:553px;width:1px;height:26px;background:#e8e8e8;"></div>
<div class="b" style="left:1161px;top:553px;width:1px;height:26px;background:#e8e8e8;"></div>
<div class="b" style="left:1281px;top:553px;width:1px;height:26px;background:#e8e8e8;"></div>
<div class="b" style="left:1401px;top:553px;width:1px;height:26px;background:#e8e8e8;"></div>
<div class="b" style="left:1521px;top:553px;width:1px;height:26px;background:#e8e8e8;"></div>
<div class="b" style="left:1641px;top:553px;width:1px;height:26px;background:#e8e8e8;"></div>
<div class="b" style="left:1761px;top:553px;width:1px;height:26px;background:#e8e8e8;"></div>
<div class="b" style="left:1881px;top:553px;width:1px;height:26px;background:#e8e8e8;"></div>
<div class="t" style="left:487.5px;top:561.00px;font-size:13.3px;line-height:17px;color:#111;">Sales &amp; Marketing</div>
<div class="t" style="left:686px;top:560.50px;font-size:14px;line-height:18px;color:#b3b3b3;">$</div>
<div class="t" style="right:1108px;top:560.50px;font-size:14px;line-height:18px;color:#111;">34,516</div>
<div class="t" style="left:806px;top:560.50px;font-size:14px;line-height:18px;color:#b3b3b3;">$</div>
<div class="t" style="right:988px;top:560.50px;font-size:14px;line-height:18px;color:#111;">17,215</div>
<div class="t" style="left:926px;top:560.50px;font-size:14px;line-height:18px;color:#b3b3b3;">$</div>
<div class="t" style="right:868px;top:560.50px;font-size:14px;line-height:18px;color:#111;">51,825</div>
<div class="t" style="right:748px;top:560.50px;font-size:14px;line-height:18px;color:#111;">-</div>
<div class="t" style="right:628px;top:560.50px;font-size:14px;line-height:18px;color:#111;">-</div>
<div class="t" style="right:508px;top:560.50px;font-size:14px;line-height:18px;color:#111;">-</div>
<div class="t" style="right:388px;top:560.50px;font-size:14px;line-height:18px;color:#111;">-</div>
<div class="t" style="right:268px;top:560.50px;font-size:14px;line-height:18px;color:#111;">-</div>
<div class="t" style="right:148px;top:560.50px;font-size:14px;line-height:18px;color:#111;">-</div>
<div class="t" style="right:28px;top:560.50px;font-size:14px;line-height:18px;color:#111;">-</div>
<div class="b" style="left:203px;top:605px;width:1678px;height:1px;background:#e8e8e8;"></div>
<div class="b" style="left:233px;top:579px;width:1px;height:26px;background:#e8e8e8;"></div>
<div class="b" style="left:273px;top:579px;width:1px;height:26px;background:#e8e8e8;"></div>
<div class="b" style="left:481px;top:579px;width:1px;height:26px;background:#e8e8e8;"></div>
<div class="b" style="left:681px;top:579px;width:1px;height:26px;background:#e8e8e8;"></div>
<div class="b" style="left:801px;top:579px;width:1px;height:26px;background:#e8e8e8;"></div>
<div class="b" style="left:921px;top:579px;width:1px;height:26px;background:#e8e8e8;"></div>
<div class="b" style="left:1041px;top:579px;width:1px;height:26px;background:#e8e8e8;"></div>
<div class="b" style="left:1161px;top:579px;width:1px;height:26px;background:#e8e8e8;"></div>
<div class="b" style="left:1281px;top:579px;width:1px;height:26px;background:#e8e8e8;"></div>
<div class="b" style="left:1401px;top:579px;width:1px;height:26px;background:#e8e8e8;"></div>
<div class="b" style="left:1521px;top:579px;width:1px;height:26px;background:#e8e8e8;"></div>
<div class="b" style="left:1641px;top:579px;width:1px;height:26px;background:#e8e8e8;"></div>
<div class="b" style="left:1761px;top:579px;width:1px;height:26px;background:#e8e8e8;"></div>
<div class="b" style="left:1881px;top:579px;width:1px;height:26px;background:#e8e8e8;"></div>
<div class="t" style="left:487.5px;top:587.00px;font-size:13.3px;line-height:17px;color:#111;">Sales &amp; Marketing</div>
<div class="t" style="left:686px;top:586.50px;font-size:14px;line-height:18px;color:#b3b3b3;">$</div>
<div class="t" style="right:1108px;top:586.50px;font-size:14px;line-height:18px;color:#111;">51,774</div>
<div class="t" style="left:806px;top:586.50px;font-size:14px;line-height:18px;color:#b3b3b3;">$</div>
<div class="t" style="right:988px;top:586.50px;font-size:14px;line-height:18px;color:#111;">25,821</div>
<div class="t" style="left:926px;top:586.50px;font-size:14px;line-height:18px;color:#b3b3b3;">$</div>
<div class="t" style="right:868px;top:586.50px;font-size:14px;line-height:18px;color:#111;">77,738</div>
<div class="t" style="right:748px;top:586.50px;font-size:14px;line-height:18px;color:#111;">-</div>
<div class="t" style="right:628px;top:586.50px;font-size:14px;line-height:18px;color:#111;">-</div>
<div class="t" style="right:508px;top:586.50px;font-size:14px;line-height:18px;color:#111;">-</div>
<div class="t" style="right:388px;top:586.50px;font-size:14px;line-height:18px;color:#111;">-</div>
<div class="t" style="right:268px;top:586.50px;font-size:14px;line-height:18px;color:#111;">-</div>
<div class="t" style="right:148px;top:586.50px;font-size:14px;line-height:18px;color:#111;">-</div>
<div class="t" style="right:28px;top:586.50px;font-size:14px;line-height:18px;color:#111;">-</div>
<div class="b" style="left:203px;top:631px;width:1678px;height:1px;background:#e8e8e8;"></div>
<div class="b" style="left:233px;top:605px;width:1px;height:26px;background:#e8e8e8;"></div>
<div class="b" style="left:273px;top:605px;width:1px;height:26px;background:#e8e8e8;"></div>
<div class="b" style="left:481px;top:605px;width:1px;height:26px;background:#e8e8e8;"></div>
<div class="b" style="left:681px;top:605px;width:1px;height:26px;background:#e8e8e8;"></div>
<div class="b" style="left:801px;top:605px;width:1px;height:26px;background:#e8e8e8;"></div>
<div class="b" style="left:921px;top:605px;width:1px;height:26px;background:#e8e8e8;"></div>
<div class="b" style="left:1041px;top:605px;width:1px;height:26px;background:#e8e8e8;"></div>
<div class="b" style="left:1161px;top:605px;width:1px;height:26px;background:#e8e8e8;"></div>
<div class="b" style="left:1281px;top:605px;width:1px;height:26px;background:#e8e8e8;"></div>
<div class="b" style="left:1401px;top:605px;width:1px;height:26px;background:#e8e8e8;"></div>
<div class="b" style="left:1521px;top:605px;width:1px;height:26px;background:#e8e8e8;"></div>
<div class="b" style="left:1641px;top:605px;width:1px;height:26px;background:#e8e8e8;"></div>
<div class="b" style="left:1761px;top:605px;width:1px;height:26px;background:#e8e8e8;"></div>
<div class="b" style="left:1881px;top:605px;width:1px;height:26px;background:#e8e8e8;"></div>
<div class="t" style="left:487.5px;top:613.00px;font-size:13.3px;line-height:17px;color:#111;">Sales &amp; Marketing</div>
<div class="t" style="left:686px;top:612.50px;font-size:14px;line-height:18px;color:#b3b3b3;">$</div>
<div class="t" style="right:1108px;top:612.50px;font-size:14px;line-height:18px;color:#111;">21,494</div>
<div class="t" style="left:806px;top:612.50px;font-size:14px;line-height:18px;color:#b3b3b3;">$</div>
<div class="t" style="right:988px;top:612.50px;font-size:14px;line-height:18px;color:#111;">15,007</div>
<div class="t" style="left:926px;top:612.50px;font-size:14px;line-height:18px;color:#b3b3b3;">$</div>
<div class="t" style="right:868px;top:612.50px;font-size:14px;line-height:18px;color:#111;">32,377</div>
<div class="t" style="right:748px;top:612.50px;font-size:14px;line-height:18px;color:#111;">-</div>
<div class="t" style="right:628px;top:612.50px;font-size:14px;line-height:18px;color:#111;">-</div>
<div class="t" style="right:508px;top:612.50px;font-size:14px;line-height:18px;color:#111;">-</div>
<div class="t" style="right:388px;top:612.50px;font-size:14px;line-height:18px;color:#111;">-</div>
<div class="t" style="right:268px;top:612.50px;font-size:14px;line-height:18px;color:#111;">-</div>
<div class="t" style="right:148px;top:612.50px;font-size:14px;line-height:18px;color:#111;">-</div>
<div class="t" style="right:28px;top:612.50px;font-size:14px;line-height:18px;color:#111;">-</div>
<div class="b" style="left:203px;top:657px;width:1678px;height:1px;background:#e8e8e8;"></div>
<div class="b" style="left:233px;top:631px;width:1px;height:26px;background:#e8e8e8;"></div>
<div class="b" style="left:273px;top:631px;width:1px;height:26px;background:#e8e8e8;"></div>
<div class="b" style="left:481px;top:631px;width:1px;height:26px;background:#e8e8e8;"></div>
<div class="b" style="left:681px;top:631px;width:1px;height:26px;background:#e8e8e8;"></div>
<div class="b" style="left:801px;top:631px;width:1px;height:26px;background:#e8e8e8;"></div>
<div class="b" style="left:921px;top:631px;width:1px;height:26px;background:#e8e8e8;"></div>
<div class="b" style="left:1041px;top:631px;width:1px;height:26px;background:#e8e8e8;"></div>
<div class="b" style="left:1161px;top:631px;width:1px;height:26px;background:#e8e8e8;"></div>
<div class="b" style="left:1281px;top:631px;width:1px;height:26px;background:#e8e8e8;"></div>
<div class="b" style="left:1401px;top:631px;width:1px;height:26px;background:#e8e8e8;"></div>
<div class="b" style="left:1521px;top:631px;width:1px;height:26px;background:#e8e8e8;"></div>
<div class="b" style="left:1641px;top:631px;width:1px;height:26px;background:#e8e8e8;"></div>
<div class="b" style="left:1761px;top:631px;width:1px;height:26px;background:#e8e8e8;"></div>
<div class="b" style="left:1881px;top:631px;width:1px;height:26px;background:#e8e8e8;"></div>
<div class="t" style="left:487.5px;top:639.00px;font-size:13.3px;line-height:17px;color:#111;">Sales &amp; Marketing</div>
<div class="t" style="left:686px;top:638.50px;font-size:14px;line-height:18px;color:#b3b3b3;">$</div>
<div class="t" style="right:1108px;top:638.50px;font-size:14px;line-height:18px;color:#111;">4,329</div>
<div class="t" style="left:806px;top:638.50px;font-size:14px;line-height:18px;color:#b3b3b3;">$</div>
<div class="t" style="right:988px;top:638.50px;font-size:14px;line-height:18px;color:#111;">305</div>
<div class="t" style="left:926px;top:638.50px;font-size:14px;line-height:18px;color:#b3b3b3;">$</div>
<div class="t" style="right:868px;top:638.50px;font-size:14px;line-height:18px;color:#111;">7,238</div>
<div class="t" style="right:748px;top:638.50px;font-size:14px;line-height:18px;color:#111;">-</div>
<div class="t" style="right:628px;top:638.50px;font-size:14px;line-height:18px;color:#111;">-</div>
<div class="t" style="right:508px;top:638.50px;font-size:14px;line-height:18px;color:#111;">-</div>
<div class="t" style="right:388px;top:638.50px;font-size:14px;line-height:18px;color:#111;">-</div>
<div class="t" style="right:268px;top:638.50px;font-size:14px;line-height:18px;color:#111;">-</div>
<div class="t" style="right:148px;top:638.50px;font-size:14px;line-height:18px;color:#111;">-</div>
<div class="t" style="right:28px;top:638.50px;font-size:14px;line-height:18px;color:#111;">-</div>
<div class="b" style="left:203px;top:683px;width:1678px;height:1px;background:#e8e8e8;"></div>
<div class="b" style="left:233px;top:657px;width:1px;height:26px;background:#e8e8e8;"></div>
<div class="b" style="left:273px;top:657px;width:1px;height:26px;background:#e8e8e8;"></div>
<div class="b" style="left:481px;top:657px;width:1px;height:26px;background:#e8e8e8;"></div>
<div class="b" style="left:681px;top:657px;width:1px;height:26px;background:#e8e8e8;"></div>
<div class="b" style="left:801px;top:657px;width:1px;height:26px;background:#e8e8e8;"></div>
<div class="b" style="left:921px;top:657px;width:1px;height:26px;background:#e8e8e8;"></div>
<div class="b" style="left:1041px;top:657px;width:1px;height:26px;background:#e8e8e8;"></div>
<div class="b" style="left:1161px;top:657px;width:1px;height:26px;background:#e8e8e8;"></div>
<div class="b" style="left:1281px;top:657px;width:1px;height:26px;background:#e8e8e8;"></div>
<div class="b" style="left:1401px;top:657px;width:1px;height:26px;background:#e8e8e8;"></div>
<div class="b" style="left:1521px;top:657px;width:1px;height:26px;background:#e8e8e8;"></div>
<div class="b" style="left:1641px;top:657px;width:1px;height:26px;background:#e8e8e8;"></div>
<div class="b" style="left:1761px;top:657px;width:1px;height:26px;background:#e8e8e8;"></div>
<div class="b" style="left:1881px;top:657px;width:1px;height:26px;background:#e8e8e8;"></div>
<div class="t" style="left:487.5px;top:665.00px;font-size:13.3px;line-height:17px;color:#111;">Sales &amp; Marketing</div>
<div class="t" style="left:686px;top:664.50px;font-size:14px;line-height:18px;color:#b3b3b3;">$</div>
<div class="t" style="right:1108px;top:664.50px;font-size:14px;line-height:18px;color:#111;">13,208</div>
<div class="t" style="left:806px;top:664.50px;font-size:14px;line-height:18px;color:#b3b3b3;">$</div>
<div class="t" style="right:988px;top:664.50px;font-size:14px;line-height:18px;color:#111;">17,814</div>
<div class="t" style="left:926px;top:664.50px;font-size:14px;line-height:18px;color:#b3b3b3;">$</div>
<div class="t" style="right:868px;top:664.50px;font-size:14px;line-height:18px;color:#111;">20,479</div>
<div class="t" style="left:1046px;top:664.50px;font-size:14px;line-height:18px;color:#b3b3b3;">$</div>
<div class="t" style="right:748px;top:664.50px;font-size:14px;line-height:18px;color:#111;">6,250</div>
<div class="t" style="left:1166px;top:664.50px;font-size:14px;line-height:18px;color:#b3b3b3;">$</div>
<div class="t" style="right:628px;top:664.50px;font-size:14px;line-height:18px;color:#111;">8,750</div>
<div class="t" style="left:1286px;top:664.50px;font-size:14px;line-height:18px;color:#b3b3b3;">$</div>
<div class="t" style="right:508px;top:664.50px;font-size:14px;line-height:18px;color:#111;">8,750</div>
<div class="t" style="left:1406px;top:664.50px;font-size:14px;line-height:18px;color:#b3b3b3;">$</div>
<div class="t" style="right:388px;top:664.50px;font-size:14px;line-height:18px;color:#111;">8,750</div>
<div class="t" style="left:1526px;top:664.50px;font-size:14px;line-height:18px;color:#b3b3b3;">$</div>
<div class="t" style="right:268px;top:664.50px;font-size:14px;line-height:18px;color:#111;">8,750</div>
<div class="t" style="left:1646px;top:664.50px;font-size:14px;line-height:18px;color:#b3b3b3;">$</div>
<div class="t" style="right:148px;top:664.50px;font-size:14px;line-height:18px;color:#111;">8,750</div>
<div class="t" style="left:1766px;top:664.50px;font-size:14px;line-height:18px;color:#b3b3b3;">$</div>
<div class="t" style="right:28px;top:664.50px;font-size:14px;line-height:18px;color:#111;">8,750</div>
<div class="b" style="left:203px;top:709px;width:1678px;height:1px;background:#e8e8e8;"></div>
<div class="b" style="left:233px;top:683px;width:1px;height:26px;background:#e8e8e8;"></div>
<div class="b" style="left:273px;top:683px;width:1px;height:26px;background:#e8e8e8;"></div>
<div class="b" style="left:481px;top:683px;width:1px;height:26px;background:#e8e8e8;"></div>
<div class="b" style="left:681px;top:683px;width:1px;height:26px;background:#e8e8e8;"></div>
<div class="b" style="left:801px;top:683px;width:1px;height:26px;background:#e8e8e8;"></div>
<div class="b" style="left:921px;top:683px;width:1px;height:26px;background:#e8e8e8;"></div>
<div class="b" style="left:1041px;top:683px;width:1px;height:26px;background:#e8e8e8;"></div>
<div class="b" style="left:1161px;top:683px;width:1px;height:26px;background:#e8e8e8;"></div>
<div class="b" style="left:1281px;top:683px;width:1px;height:26px;background:#e8e8e8;"></div>
<div class="b" style="left:1401px;top:683px;width:1px;height:26px;background:#e8e8e8;"></div>
<div class="b" style="left:1521px;top:683px;width:1px;height:26px;background:#e8e8e8;"></div>
<div class="b" style="left:1641px;top:683px;width:1px;height:26px;background:#e8e8e8;"></div>
<div class="b" style="left:1761px;top:683px;width:1px;height:26px;background:#e8e8e8;"></div>
<div class="b" style="left:1881px;top:683px;width:1px;height:26px;background:#e8e8e8;"></div>
<div class="t" style="left:487.5px;top:691.00px;font-size:13.3px;line-height:17px;color:#111;">Sales &amp; Marketing</div>
<div class="t" style="left:686px;top:690.50px;font-size:14px;line-height:18px;color:#b3b3b3;">$</div>
<div class="t" style="right:1108px;top:690.50px;font-size:14px;line-height:18px;color:#111;">649</div>
<div class="t" style="left:806px;top:690.50px;font-size:14px;line-height:18px;color:#b3b3b3;">$</div>
<div class="t" style="right:988px;top:690.50px;font-size:14px;line-height:18px;color:#111;">349</div>
<div class="t" style="left:926px;top:690.50px;font-size:14px;line-height:18px;color:#b3b3b3;">$</div>
<div class="t" style="right:868px;top:690.50px;font-size:14px;line-height:18px;color:#111;">1,049</div>
<div class="t" style="right:748px;top:690.50px;font-size:14px;line-height:18px;color:#111;">-</div>
<div class="t" style="right:628px;top:690.50px;font-size:14px;line-height:18px;color:#111;">-</div>
<div class="t" style="right:508px;top:690.50px;font-size:14px;line-height:18px;color:#111;">-</div>
<div class="t" style="right:388px;top:690.50px;font-size:14px;line-height:18px;color:#111;">-</div>
<div class="t" style="right:268px;top:690.50px;font-size:14px;line-height:18px;color:#111;">-</div>
<div class="t" style="right:148px;top:690.50px;font-size:14px;line-height:18px;color:#111;">-</div>
<div class="t" style="right:28px;top:690.50px;font-size:14px;line-height:18px;color:#111;">-</div>
<div class="b" style="left:203px;top:735px;width:1678px;height:1px;background:#e8e8e8;"></div>
<div class="b" style="left:233px;top:709px;width:1px;height:26px;background:#e8e8e8;"></div>
<div class="b" style="left:273px;top:709px;width:1px;height:26px;background:#e8e8e8;"></div>
<div class="b" style="left:481px;top:709px;width:1px;height:26px;background:#e8e8e8;"></div>
<div class="b" style="left:681px;top:709px;width:1px;height:26px;background:#e8e8e8;"></div>
<div class="b" style="left:801px;top:709px;width:1px;height:26px;background:#e8e8e8;"></div>
<div class="b" style="left:921px;top:709px;width:1px;height:26px;background:#e8e8e8;"></div>
<div class="b" style="left:1041px;top:709px;width:1px;height:26px;background:#e8e8e8;"></div>
<div class="b" style="left:1161px;top:709px;width:1px;height:26px;background:#e8e8e8;"></div>
<div class="b" style="left:1281px;top:709px;width:1px;height:26px;background:#e8e8e8;"></div>
<div class="b" style="left:1401px;top:709px;width:1px;height:26px;background:#e8e8e8;"></div>
<div class="b" style="left:1521px;top:709px;width:1px;height:26px;background:#e8e8e8;"></div>
<div class="b" style="left:1641px;top:709px;width:1px;height:26px;background:#e8e8e8;"></div>
<div class="b" style="left:1761px;top:709px;width:1px;height:26px;background:#e8e8e8;"></div>
<div class="b" style="left:1881px;top:709px;width:1px;height:26px;background:#e8e8e8;"></div>
<div class="t" style="left:487.5px;top:717.00px;font-size:13.3px;line-height:17px;color:#111;">Sales &amp; Marketing</div>
<div class="t" style="left:686px;top:716.50px;font-size:14px;line-height:18px;color:#b3b3b3;">$</div>
<div class="t" style="right:1108px;top:716.50px;font-size:14px;line-height:18px;color:#111;">540</div>
<div class="t" style="left:806px;top:716.50px;font-size:14px;line-height:18px;color:#b3b3b3;">$</div>
<div class="t" style="right:988px;top:716.50px;font-size:14px;line-height:18px;color:#111;">290</div>
<div class="t" style="left:926px;top:716.50px;font-size:14px;line-height:18px;color:#b3b3b3;">$</div>
<div class="t" style="right:868px;top:716.50px;font-size:14px;line-height:18px;color:#111;">872</div>
<div class="t" style="right:748px;top:716.50px;font-size:14px;line-height:18px;color:#111;">-</div>
<div class="t" style="right:628px;top:716.50px;font-size:14px;line-height:18px;color:#111;">-</div>
<div class="t" style="right:508px;top:716.50px;font-size:14px;line-height:18px;color:#111;">-</div>
<div class="t" style="right:388px;top:716.50px;font-size:14px;line-height:18px;color:#111;">-</div>
<div class="t" style="right:268px;top:716.50px;font-size:14px;line-height:18px;color:#111;">-</div>
<div class="t" style="right:148px;top:716.50px;font-size:14px;line-height:18px;color:#111;">-</div>
<div class="t" style="right:28px;top:716.50px;font-size:14px;line-height:18px;color:#111;">-</div>
<div class="t" style="left:288.5px;top:717.00px;font-size:13.3px;line-height:17px;color:#111;transform:scaleX(0.962);transform-origin:0 0;">Website Expenses</div>
<div class="b" style="left:245px;top:716px;width:13px;height:13px;border:1px solid #8a8a8a;background:#fff;"></div>
<div class="b" style="left:212px;top:725px;width:3px;height:3px;background:#111;"></div>
<div class="b" style="left:219px;top:725px;width:3px;height:3px;background:#111;"></div>
<div class="b" style="left:203px;top:761px;width:1678px;height:1px;background:#e8e8e8;"></div>
<div class="b" style="left:233px;top:735px;width:1px;height:26px;background:#e8e8e8;"></div>
<div class="b" style="left:273px;top:735px;width:1px;height:26px;background:#e8e8e8;"></div>
<div class="b" style="left:481px;top:735px;width:1px;height:26px;background:#e8e8e8;"></div>
<div class="b" style="left:681px;top:735px;width:1px;height:26px;background:#e8e8e8;"></div>
<div class="b" style="left:801px;top:735px;width:1px;height:26px;background:#e8e8e8;"></div>
<div class="b" style="left:921px;top:735px;width:1px;height:26px;background:#e8e8e8;"></div>
<div class="b" style="left:1041px;top:735px;width:1px;height:26px;background:#e8e8e8;"></div>
<div class="b" style="left:1161px;top:735px;width:1px;height:26px;background:#e8e8e8;"></div>
<div class="b" style="left:1281px;top:735px;width:1px;height:26px;background:#e8e8e8;"></div>
<div class="b" style="left:1401px;top:735px;width:1px;height:26px;background:#e8e8e8;"></div>
<div class="b" style="left:1521px;top:735px;width:1px;height:26px;background:#e8e8e8;"></div>
<div class="b" style="left:1641px;top:735px;width:1px;height:26px;background:#e8e8e8;"></div>
<div class="b" style="left:1761px;top:735px;width:1px;height:26px;background:#e8e8e8;"></div>
<div class="b" style="left:1881px;top:735px;width:1px;height:26px;background:#e8e8e8;"></div>
<div class="t" style="left:487.5px;top:743.00px;font-size:13.3px;line-height:17px;color:#111;">Sales &amp; Marketing</div>
<div class="t" style="right:1108px;top:742.50px;font-size:14px;line-height:18px;color:#111;">-</div>
<div class="t" style="right:988px;top:742.50px;font-size:14px;line-height:18px;color:#111;">-</div>
<div class="t" style="right:868px;top:742.50px;font-size:14px;line-height:18px;color:#111;">-</div>
<div class="t" style="right:748px;top:742.50px;font-size:14px;line-height:18px;color:#111;">-</div>
<div class="t" style="right:628px;top:742.50px;font-size:14px;line-height:18px;color:#111;">-</div>
<div class="t" style="right:508px;top:742.50px;font-size:14px;line-height:18px;color:#111;">-</div>
<div class="t" style="right:388px;top:742.50px;font-size:14px;line-height:18px;color:#111;">-</div>
<div class="t" style="right:268px;top:742.50px;font-size:14px;line-height:18px;color:#111;">-</div>
<div class="t" style="right:148px;top:742.50px;font-size:14px;line-height:18px;color:#111;">-</div>
<div class="t" style="right:28px;top:742.50px;font-size:14px;line-height:18px;color:#111;">-</div>
<div class="t" style="left:288.5px;top:743.00px;font-size:13.3px;line-height:17px;color:#111;transform:scaleX(0.995);transform-origin:0 0;">Telephone &amp; Internet</div>
<div class="b" style="left:245px;top:742px;width:13px;height:13px;border:1px solid #8a8a8a;background:#fff;"></div>
<div class="b" style="left:212px;top:751px;width:3px;height:3px;background:#111;"></div>
<div class="b" style="left:219px;top:751px;width:3px;height:3px;background:#111;"></div>
<div class="b" style="left:203px;top:787px;width:1678px;height:1px;background:#e8e8e8;"></div>
<div class="b" style="left:233px;top:761px;width:1px;height:26px;background:#e8e8e8;"></div>
<div class="b" style="left:273px;top:761px;width:1px;height:26px;background:#e8e8e8;"></div>
<div class="b" style="left:481px;top:761px;width:1px;height:26px;background:#e8e8e8;"></div>
<div class="b" style="left:681px;top:761px;width:1px;height:26px;background:#e8e8e8;"></div>
<div class="b" style="left:801px;top:761px;width:1px;height:26px;background:#e8e8e8;"></div>
<div class="b" style="left:921px;top:761px;width:1px;height:26px;background:#e8e8e8;"></div>
<div class="b" style="left:1041px;top:761px;width:1px;height:26px;background:#e8e8e8;"></div>
<div class="b" style="left:1161px;top:761px;width:1px;height:26px;background:#e8e8e8;"></div>
<div class="b" style="left:1281px;top:761px;width:1px;height:26px;background:#e8e8e8;"></div>
<div class="b" style="left:1401px;top:761px;width:1px;height:26px;background:#e8e8e8;"></div>
<div class="b" style="left:1521px;top:761px;width:1px;height:26px;background:#e8e8e8;"></div>
<div class="b" style="left:1641px;top:761px;width:1px;height:26px;background:#e8e8e8;"></div>
<div class="b" style="left:1761px;top:761px;width:1px;height:26px;background:#e8e8e8;"></div>
<div class="b" style="left:1881px;top:761px;width:1px;height:26px;background:#e8e8e8;"></div>
<div class="t" style="left:487.5px;top:769.00px;font-size:13.3px;line-height:17px;color:#111;">Sales &amp; Marketing</div>
<div class="t" style="left:686px;top:768.50px;font-size:14px;line-height:18px;color:#b3b3b3;">$</div>
<div class="t" style="right:1108px;top:768.50px;font-size:14px;line-height:18px;color:#111;">1,034</div>
<div class="t" style="left:806px;top:768.50px;font-size:14px;line-height:18px;color:#b3b3b3;">$</div>
<div class="t" style="right:988px;top:768.50px;font-size:14px;line-height:18px;color:#111;">680</div>
<div class="t" style="left:926px;top:768.50px;font-size:14px;line-height:18px;color:#b3b3b3;">$</div>
<div class="t" style="right:868px;top:768.50px;font-size:14px;line-height:18px;color:#111;">2,146</div>
<div class="t" style="right:748px;top:768.50px;font-size:14px;line-height:18px;color:#111;">-</div>
<div class="t" style="right:628px;top:768.50px;font-size:14px;line-height:18px;color:#111;">-</div>
<div class="t" style="right:508px;top:768.50px;font-size:14px;line-height:18px;color:#111;">-</div>
<div class="t" style="right:388px;top:768.50px;font-size:14px;line-height:18px;color:#111;">-</div>
<div class="t" style="right:268px;top:768.50px;font-size:14px;line-height:18px;color:#111;">-</div>
<div class="t" style="right:148px;top:768.50px;font-size:14px;line-height:18px;color:#111;">-</div>
<div class="t" style="right:28px;top:768.50px;font-size:14px;line-height:18px;color:#111;">-</div>
<div class="t" style="left:288.5px;top:769.00px;font-size:13.3px;line-height:17px;color:#111;transform:scaleX(0.985);transform-origin:0 0;">Other Misc Expense</div>
<div class="b" style="left:245px;top:768px;width:13px;height:13px;border:1px solid #8a8a8a;background:#fff;"></div>
<div class="b" style="left:212px;top:777px;width:3px;height:3px;background:#111;"></div>
<div class="b" style="left:219px;top:777px;width:3px;height:3px;background:#111;"></div>
<div class="b" style="left:203px;top:813px;width:1678px;height:1px;background:#e8e8e8;"></div>
<div class="b" style="left:233px;top:787px;width:1px;height:26px;background:#e8e8e8;"></div>
<div class="b" style="left:273px;top:787px;width:1px;height:26px;background:#e8e8e8;"></div>
<div class="b" style="left:481px;top:787px;width:1px;height:26px;background:#e8e8e8;"></div>
<div class="b" style="left:681px;top:787px;width:1px;height:26px;background:#e8e8e8;"></div>
<div class="b" style="left:801px;top:787px;width:1px;height:26px;background:#e8e8e8;"></div>
<div class="b" style="left:921px;top:787px;width:1px;height:26px;background:#e8e8e8;"></div>
<div class="b" style="left:1041px;top:787px;width:1px;height:26px;background:#e8e8e8;"></div>
<div class="b" style="left:1161px;top:787px;width:1px;height:26px;background:#e8e8e8;"></div>
<div class="b" style="left:1281px;top:787px;width:1px;height:26px;background:#e8e8e8;"></div>
<div class="b" style="left:1401px;top:787px;width:1px;height:26px;background:#e8e8e8;"></div>
<div class="b" style="left:1521px;top:787px;width:1px;height:26px;background:#e8e8e8;"></div>
<div class="b" style="left:1641px;top:787px;width:1px;height:26px;background:#e8e8e8;"></div>
<div class="b" style="left:1761px;top:787px;width:1px;height:26px;background:#e8e8e8;"></div>
<div class="b" style="left:1881px;top:787px;width:1px;height:26px;background:#e8e8e8;"></div>
<div class="t" style="left:487.5px;top:795.00px;font-size:13.3px;line-height:17px;color:#111;">Sales &amp; Marketing</div>
<div class="t" style="right:1108px;top:794.50px;font-size:14px;line-height:18px;color:#111;">-</div>
<div class="t" style="right:988px;top:794.50px;font-size:14px;line-height:18px;color:#111;">-</div>
<div class="t" style="right:868px;top:794.50px;font-size:14px;line-height:18px;color:#111;">-</div>
<div class="t" style="right:748px;top:794.50px;font-size:14px;line-height:18px;color:#111;">-</div>
<div class="t" style="right:628px;top:794.50px;font-size:14px;line-height:18px;color:#111;">-</div>
<div class="t" style="right:508px;top:794.50px;font-size:14px;line-height:18px;color:#111;">-</div>
<div class="t" style="right:388px;top:794.50px;font-size:14px;line-height:18px;color:#111;">-</div>
<div class="t" style="right:268px;top:794.50px;font-size:14px;line-height:18px;color:#111;">-</div>
<div class="t" style="right:148px;top:794.50px;font-size:14px;line-height:18px;color:#111;">-</div>
<div class="t" style="right:28px;top:794.50px;font-size:14px;line-height:18px;color:#111;">-</div>
<div class="t" style="left:288.5px;top:795.00px;font-size:13.3px;line-height:17px;color:#111;transform:scaleX(0.97);transform-origin:0 0;">Travel - Other</div>
<div class="b" style="left:245px;top:794px;width:13px;height:13px;border:1px solid #8a8a8a;background:#fff;"></div>
<div class="b" style="left:212px;top:803px;width:3px;height:3px;background:#111;"></div>
<div class="b" style="left:219px;top:803px;width:3px;height:3px;background:#111;"></div>
<div class="b" style="left:203px;top:839px;width:1678px;height:1px;background:#e8e8e8;"></div>
<div class="b" style="left:233px;top:813px;width:1px;height:26px;background:#e8e8e8;"></div>
<div class="b" style="left:273px;top:813px;width:1px;height:26px;background:#e8e8e8;"></div>
<div class="b" style="left:481px;top:813px;width:1px;height:26px;background:#e8e8e8;"></div>
<div class="b" style="left:681px;top:813px;width:1px;height:26px;background:#e8e8e8;"></div>
<div class="b" style="left:801px;top:813px;width:1px;height:26px;background:#e8e8e8;"></div>
<div class="b" style="left:921px;top:813px;width:1px;height:26px;background:#e8e8e8;"></div>
<div class="b" style="left:1041px;top:813px;width:1px;height:26px;background:#e8e8e8;"></div>
<div class="b" style="left:1161px;top:813px;width:1px;height:26px;background:#e8e8e8;"></div>
<div class="b" style="left:1281px;top:813px;width:1px;height:26px;background:#e8e8e8;"></div>
<div class="b" style="left:1401px;top:813px;width:1px;height:26px;background:#e8e8e8;"></div>
<div class="b" style="left:1521px;top:813px;width:1px;height:26px;background:#e8e8e8;"></div>
<div class="b" style="left:1641px;top:813px;width:1px;height:26px;background:#e8e8e8;"></div>
<div class="b" style="left:1761px;top:813px;width:1px;height:26px;background:#e8e8e8;"></div>
<div class="b" style="left:1881px;top:813px;width:1px;height:26px;background:#e8e8e8;"></div>
<div class="t" style="left:487.5px;top:821.00px;font-size:13.3px;line-height:17px;color:#111;">Sales &amp; Marketing</div>
<div class="t" style="left:686px;top:820.50px;font-size:14px;line-height:18px;color:#b3b3b3;">$</div>
<div class="t" style="right:1108px;top:820.50px;font-size:14px;line-height:18px;color:#111;">2,494</div>
<div class="t" style="left:806px;top:820.50px;font-size:14px;line-height:18px;color:#b3b3b3;">$</div>
<div class="t" style="right:988px;top:820.50px;font-size:14px;line-height:18px;color:#111;">5,060</div>
<div class="t" style="left:926px;top:820.50px;font-size:14px;line-height:18px;color:#b3b3b3;">$</div>
<div class="t" style="right:868px;top:820.50px;font-size:14px;line-height:18px;color:#111;">7,751</div>
<div class="t" style="right:748px;top:820.50px;font-size:14px;line-height:18px;color:#111;">-</div>
<div class="t" style="right:628px;top:820.50px;font-size:14px;line-height:18px;color:#111;">-</div>
<div class="t" style="right:508px;top:820.50px;font-size:14px;line-height:18px;color:#111;">-</div>
<div class="t" style="right:388px;top:820.50px;font-size:14px;line-height:18px;color:#111;">-</div>
<div class="t" style="right:268px;top:820.50px;font-size:14px;line-height:18px;color:#111;">-</div>
<div class="t" style="right:148px;top:820.50px;font-size:14px;line-height:18px;color:#111;">-</div>
<div class="t" style="right:28px;top:820.50px;font-size:14px;line-height:18px;color:#111;">-</div>
<div class="t" style="left:288.5px;top:821.00px;font-size:13.3px;line-height:17px;color:#111;transform:scaleX(0.953);transform-origin:0 0;">Travel - Lodging</div>
<div class="b" style="left:245px;top:820px;width:13px;height:13px;border:1px solid #8a8a8a;background:#fff;"></div>
<div class="b" style="left:212px;top:829px;width:3px;height:3px;background:#111;"></div>
<div class="b" style="left:219px;top:829px;width:3px;height:3px;background:#111;"></div>
<div class="b" style="left:203px;top:865px;width:1678px;height:1px;background:#e8e8e8;"></div>
<div class="b" style="left:233px;top:839px;width:1px;height:26px;background:#e8e8e8;"></div>
<div class="b" style="left:273px;top:839px;width:1px;height:26px;background:#e8e8e8;"></div>
<div class="b" style="left:481px;top:839px;width:1px;height:26px;background:#e8e8e8;"></div>
<div class="b" style="left:681px;top:839px;width:1px;height:26px;background:#e8e8e8;"></div>
<div class="b" style="left:801px;top:839px;width:1px;height:26px;background:#e8e8e8;"></div>
<div class="b" style="left:921px;top:839px;width:1px;height:26px;background:#e8e8e8;"></div>
<div class="b" style="left:1041px;top:839px;width:1px;height:26px;background:#e8e8e8;"></div>
<div class="b" style="left:1161px;top:839px;width:1px;height:26px;background:#e8e8e8;"></div>
<div class="b" style="left:1281px;top:839px;width:1px;height:26px;background:#e8e8e8;"></div>
<div class="b" style="left:1401px;top:839px;width:1px;height:26px;background:#e8e8e8;"></div>
<div class="b" style="left:1521px;top:839px;width:1px;height:26px;background:#e8e8e8;"></div>
<div class="b" style="left:1641px;top:839px;width:1px;height:26px;background:#e8e8e8;"></div>
<div class="b" style="left:1761px;top:839px;width:1px;height:26px;background:#e8e8e8;"></div>
<div class="b" style="left:1881px;top:839px;width:1px;height:26px;background:#e8e8e8;"></div>
<div class="t" style="left:487.5px;top:847.00px;font-size:13.3px;line-height:17px;color:#111;">Sales &amp; Marketing</div>
<div class="t" style="left:686px;top:846.50px;font-size:14px;line-height:18px;color:#b3b3b3;">$</div>
<div class="t" style="right:1108px;top:846.50px;font-size:14px;line-height:18px;color:#111;">12,632</div>
<div class="t" style="left:806px;top:846.50px;font-size:14px;line-height:18px;color:#b3b3b3;">$</div>
<div class="t" style="right:988px;top:846.50px;font-size:14px;line-height:18px;color:#111;">2,878</div>
<div class="t" style="left:926px;top:846.50px;font-size:14px;line-height:18px;color:#b3b3b3;">$</div>
<div class="t" style="right:868px;top:846.50px;font-size:14px;line-height:18px;color:#111;">14,980</div>
<div class="t" style="right:748px;top:846.50px;font-size:14px;line-height:18px;color:#111;">-</div>
<div class="t" style="right:628px;top:846.50px;font-size:14px;line-height:18px;color:#111;">-</div>
<div class="t" style="right:508px;top:846.50px;font-size:14px;line-height:18px;color:#111;">-</div>
<div class="t" style="right:388px;top:846.50px;font-size:14px;line-height:18px;color:#111;">-</div>
<div class="t" style="right:268px;top:846.50px;font-size:14px;line-height:18px;color:#111;">-</div>
<div class="t" style="right:148px;top:846.50px;font-size:14px;line-height:18px;color:#111;">-</div>
<div class="t" style="right:28px;top:846.50px;font-size:14px;line-height:18px;color:#111;">-</div>
<div class="t" style="left:288.5px;top:847.00px;font-size:13.3px;line-height:17px;color:#111;transform:scaleX(0.992);transform-origin:0 0;">Travel - Airfare</div>
<div class="b" style="left:245px;top:846px;width:13px;height:13px;border:1px solid #8a8a8a;background:#fff;"></div>
<div class="b" style="left:212px;top:855px;width:3px;height:3px;background:#111;"></div>
<div class="b" style="left:219px;top:855px;width:3px;height:3px;background:#111;"></div>
<div class="b" style="left:203px;top:891px;width:1678px;height:1px;background:#e8e8e8;"></div>
<div class="b" style="left:233px;top:865px;width:1px;height:26px;background:#e8e8e8;"></div>
<div class="b" style="left:273px;top:865px;width:1px;height:26px;background:#e8e8e8;"></div>
<div class="b" style="left:481px;top:865px;width:1px;height:26px;background:#e8e8e8;"></div>
<div class="b" style="left:681px;top:865px;width:1px;height:26px;background:#e8e8e8;"></div>
<div class="b" style="left:801px;top:865px;width:1px;height:26px;background:#e8e8e8;"></div>
<div class="b" style="left:921px;top:865px;width:1px;height:26px;background:#e8e8e8;"></div>
<div class="b" style="left:1041px;top:865px;width:1px;height:26px;background:#e8e8e8;"></div>
<div class="b" style="left:1161px;top:865px;width:1px;height:26px;background:#e8e8e8;"></div>
<div class="b" style="left:1281px;top:865px;width:1px;height:26px;background:#e8e8e8;"></div>
<div class="b" style="left:1401px;top:865px;width:1px;height:26px;background:#e8e8e8;"></div>
<div class="b" style="left:1521px;top:865px;width:1px;height:26px;background:#e8e8e8;"></div>
<div class="b" style="left:1641px;top:865px;width:1px;height:26px;background:#e8e8e8;"></div>
<div class="b" style="left:1761px;top:865px;width:1px;height:26px;background:#e8e8e8;"></div>
<div class="b" style="left:1881px;top:865px;width:1px;height:26px;background:#e8e8e8;"></div>
<div class="t" style="left:487.5px;top:873.00px;font-size:13.3px;line-height:17px;color:#111;">Sales &amp; Marketing</div>
<div class="t" style="left:686px;top:872.50px;font-size:14px;line-height:18px;color:#b3b3b3;">$</div>
<div class="t" style="right:1108px;top:872.50px;font-size:14px;line-height:18px;color:#111;">14,752</div>
<div class="t" style="left:806px;top:872.50px;font-size:14px;line-height:18px;color:#b3b3b3;">$</div>
<div class="t" style="right:988px;top:872.50px;font-size:14px;line-height:18px;color:#111;">15,815</div>
<div class="t" style="left:926px;top:872.50px;font-size:14px;line-height:18px;color:#b3b3b3;">$</div>
<div class="t" style="right:868px;top:872.50px;font-size:14px;line-height:18px;color:#111;">34,973</div>
<div class="t" style="right:748px;top:872.50px;font-size:14px;line-height:18px;color:#111;">-</div>
<div class="t" style="right:628px;top:872.50px;font-size:14px;line-height:18px;color:#111;">-</div>
<div class="t" style="right:508px;top:872.50px;font-size:14px;line-height:18px;color:#111;">-</div>
<div class="t" style="right:388px;top:872.50px;font-size:14px;line-height:18px;color:#111;">-</div>
<div class="t" style="right:268px;top:872.50px;font-size:14px;line-height:18px;color:#111;">-</div>
<div class="t" style="right:148px;top:872.50px;font-size:14px;line-height:18px;color:#111;">-</div>
<div class="t" style="right:28px;top:872.50px;font-size:14px;line-height:18px;color:#111;">-</div>
<div class="t" style="left:288.5px;top:873.00px;font-size:13.3px;line-height:17px;color:#111;transform:scaleX(0.97);transform-origin:0 0;">Travel - Meals</div>
<div class="b" style="left:245px;top:872px;width:13px;height:13px;border:1px solid #8a8a8a;background:#fff;"></div>
<div class="b" style="left:212px;top:881px;width:3px;height:3px;background:#111;"></div>
<div class="b" style="left:219px;top:881px;width:3px;height:3px;background:#111;"></div>
<div class="b" style="left:203px;top:917px;width:1678px;height:1px;background:#e8e8e8;"></div>
<div class="b" style="left:233px;top:891px;width:1px;height:26px;background:#e8e8e8;"></div>
<div class="b" style="left:273px;top:891px;width:1px;height:26px;background:#e8e8e8;"></div>
<div class="b" style="left:481px;top:891px;width:1px;height:26px;background:#e8e8e8;"></div>
<div class="b" style="left:681px;top:891px;width:1px;height:26px;background:#e8e8e8;"></div>
<div class="b" style="left:801px;top:891px;width:1px;height:26px;background:#e8e8e8;"></div>
<div class="b" style="left:921px;top:891px;width:1px;height:26px;background:#e8e8e8;"></div>
<div class="b" style="left:1041px;top:891px;width:1px;height:26px;background:#e8e8e8;"></div>
<div class="b" style="left:1161px;top:891px;width:1px;height:26px;background:#e8e8e8;"></div>
<div class="b" style="left:1281px;top:891px;width:1px;height:26px;background:#e8e8e8;"></div>
<div class="b" style="left:1401px;top:891px;width:1px;height:26px;background:#e8e8e8;"></div>
<div class="b" style="left:1521px;top:891px;width:1px;height:26px;background:#e8e8e8;"></div>
<div class="b" style="left:1641px;top:891px;width:1px;height:26px;background:#e8e8e8;"></div>
<div class="b" style="left:1761px;top:891px;width:1px;height:26px;background:#e8e8e8;"></div>
<div class="b" style="left:1881px;top:891px;width:1px;height:26px;background:#e8e8e8;"></div>
<div class="t" style="left:487.5px;top:899.00px;font-size:13.3px;line-height:17px;color:#111;">Sales &amp; Marketing</div>
<div class="t" style="left:686px;top:898.50px;font-size:14px;line-height:18px;color:#b3b3b3;">$</div>
<div class="t" style="right:1108px;top:898.50px;font-size:14px;line-height:18px;color:#111;">1,881</div>
<div class="t" style="left:806px;top:898.50px;font-size:14px;line-height:18px;color:#b3b3b3;">$</div>
<div class="t" style="right:988px;top:898.50px;font-size:14px;line-height:18px;color:#111;">2,115</div>
<div class="t" style="left:926px;top:898.50px;font-size:14px;line-height:18px;color:#b3b3b3;">$</div>
<div class="t" style="right:868px;top:898.50px;font-size:14px;line-height:18px;color:#111;">3,835</div>
<div class="t" style="right:748px;top:898.50px;font-size:14px;line-height:18px;color:#111;">-</div>
<div class="t" style="right:628px;top:898.50px;font-size:14px;line-height:18px;color:#111;">-</div>
<div class="t" style="right:508px;top:898.50px;font-size:14px;line-height:18px;color:#111;">-</div>
<div class="t" style="right:388px;top:898.50px;font-size:14px;line-height:18px;color:#111;">-</div>
<div class="t" style="right:268px;top:898.50px;font-size:14px;line-height:18px;color:#111;">-</div>
<div class="t" style="right:148px;top:898.50px;font-size:14px;line-height:18px;color:#111;">-</div>
<div class="t" style="right:28px;top:898.50px;font-size:14px;line-height:18px;color:#111;">-</div>
<div class="t" style="left:288.5px;top:899.00px;font-size:13.3px;line-height:17px;color:#111;transform:scaleX(1.0);transform-origin:0 0;">Travel - Parking/Taxi</div>
<div class="b" style="left:245px;top:898px;width:13px;height:13px;border:1px solid #8a8a8a;background:#fff;"></div>
<div class="b" style="left:212px;top:907px;width:3px;height:3px;background:#111;"></div>
<div class="b" style="left:219px;top:907px;width:3px;height:3px;background:#111;"></div>
<div class="b" style="left:203px;top:917px;width:1678px;height:1.5px;background:#e6e6e6;"></div>
<div class="b" style="left:681px;top:918px;width:1200px;height:14.5px;background:#f9f9f9;border-bottom:1px solid #ececec;"></div>
<div class="b" style="left:697px;top:922px;width:305px;height:8px;background:#c4c4c4;border-radius:4px;"></div>
<div class="b" style="left:203px;top:475px;width:265px;height:234px;background:#fff;"></div>
<svg class="b" style="left:218px;top:488px;" width="22" height="22" viewBox="0 0 22 22"><circle cx="11" cy="11" r="9.6" fill="none" stroke="#000" stroke-width="2"/><path stroke="#000" stroke-width="2.2" d="M11 5.5 V16.5 M5.5 11 H16.5"/></svg>
<div class="t" style="left:250.5px;top:493.00px;font-size:14.3px;line-height:18px;font-weight:bold;color:#050505;">Add Subitem</div>
<div class="b" style="left:203px;top:515px;width:265px;height:36px;background:#d6d6d6;"></div>
<svg class="b" style="left:218px;top:523px;" width="22" height="22" viewBox="0 0 22 22"><circle cx="11" cy="11" r="9.6" fill="none" stroke="#000" stroke-width="2"/><path stroke="#000" stroke-width="2.2" d="M11 5.5 V16.5 M5.5 11 H16.5"/></svg>
<div class="t" style="left:250.5px;top:528.00px;font-size:14.3px;line-height:18px;font-weight:bold;color:#050505;">Add Driver</div>
<div class="t" style="left:249px;top:559.50px;font-size:12.2px;line-height:15px;color:#1a1a1a;transform:scaleX(1);transform-origin:0 0;">Growth on Historicals</div>
<svg class="b" style="left:379px;top:561px;" width="11" height="11" viewBox="0 0 11 11"><circle cx="5.5" cy="5.5" r="4.9" fill="none" stroke="#4f5d82" stroke-width="1"/><rect x="5" y="4.6" width="1" height="3.8" fill="#4f5d82"/><rect x="5" y="2.6" width="1" height="1" fill="#4f5d82"/></svg>
<div class="t" style="left:249px;top:584.50px;font-size:12.2px;line-height:15px;color:#1a1a1a;transform:scaleX(1);transform-origin:0 0;">Based on % of Another Account</div>
<svg class="b" style="left:437px;top:586px;" width="11" height="11" viewBox="0 0 11 11"><circle cx="5.5" cy="5.5" r="4.9" fill="none" stroke="#4f5d82" stroke-width="1"/><rect x="5" y="4.6" width="1" height="3.8" fill="#4f5d82"/><rect x="5" y="2.6" width="1" height="1" fill="#4f5d82"/></svg>
<div class="t" style="left:249px;top:609.50px;font-size:12.2px;line-height:15px;color:#1a1a1a;transform:scaleX(1);transform-origin:0 0;">Based on $/ Headcount</div>
<svg class="b" style="left:389px;top:611px;" width="11" height="11" viewBox="0 0 11 11"><circle cx="5.5" cy="5.5" r="4.9" fill="none" stroke="#4f5d82" stroke-width="1"/><rect x="5" y="4.6" width="1" height="3.8" fill="#4f5d82"/><rect x="5" y="2.6" width="1" height="1" fill="#4f5d82"/></svg>
<div class="t" style="left:249px;top:634.50px;font-size:12.2px;line-height:15px;color:#1a1a1a;transform:scaleX(0.97);transform-origin:0 0;">Annual Target</div>
<svg class="b" style="left:335px;top:636px;" width="11" height="11" viewBox="0 0 11 11"><circle cx="5.5" cy="5.5" r="4.9" fill="none" stroke="#4f5d82" stroke-width="1"/><rect x="5" y="4.6" width="1" height="3.8" fill="#4f5d82"/><rect x="5" y="2.6" width="1" height="1" fill="#4f5d82"/></svg>
<div class="t" style="left:249px;top:659.50px;font-size:12.2px;line-height:15px;color:#1a1a1a;transform:scaleX(0.975);transform-origin:0 0;">Annual Spread</div>
<svg class="b" style="left:337px;top:661px;" width="11" height="11" viewBox="0 0 11 11"><circle cx="5.5" cy="5.5" r="4.9" fill="none" stroke="#4f5d82" stroke-width="1"/><rect x="5" y="4.6" width="1" height="3.8" fill="#4f5d82"/><rect x="5" y="2.6" width="1" height="1" fill="#4f5d82"/></svg>
<div class="t" style="left:249px;top:684.50px;font-size:12.2px;line-height:15px;color:#1a1a1a;transform:scaleX(1);transform-origin:0 0;">Custom</div>
<svg class="b" style="left:297px;top:686px;" width="11" height="11" viewBox="0 0 11 11"><circle cx="5.5" cy="5.5" r="4.9" fill="none" stroke="#4f5d82" stroke-width="1"/><rect x="5" y="4.6" width="1" height="3.8" fill="#4f5d82"/><rect x="5" y="2.6" width="1" height="1" fill="#4f5d82"/></svg>
<div class="b" style="left:16px;top:936px;width:60px;height:60px;border-radius:50%;background:#98cbc4;box-shadow:0 2px 8px rgba(0,0,0,0.2);"></div>
<svg class="b" style="left:29px;top:950px;" width="34" height="34" viewBox="0 0 34 34"><rect x="7.6" y="1" width="24.5" height="19" rx="3.5" fill="#80b3af"/><path fill="#22364c" stroke="#98cbc4" stroke-width="1.4" d="M5 5.2 Q15 4.4 25 5.2 Q28 5.4 27.9 8.5 Q28.7 15.5 27.9 22.5 Q27.7 25.5 25 25.7 L17.8 26 L14.7 30.6 L11.6 26 L5 25.7 Q2.1 25.5 2 22.5 Q1.3 15.5 2 8.5 Q2.1 5.4 5 5.2 Z"/></svg>
</body></html>
